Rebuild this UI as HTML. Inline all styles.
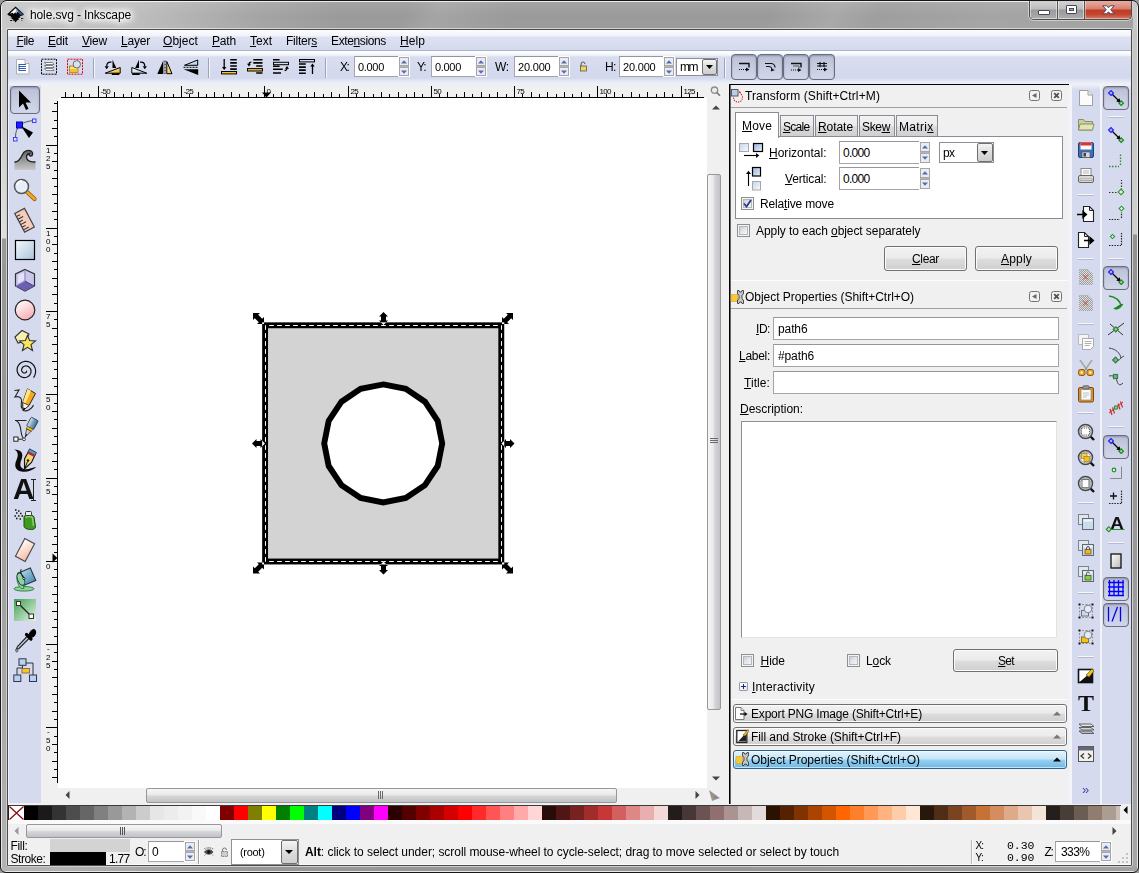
<!DOCTYPE html><html><head><meta charset="utf-8"><title>hole.svg - Inkscape</title><style>
*{box-sizing:border-box;margin:0;padding:0}
html,body{width:1139px;height:873px;overflow:hidden;background:#9a9a9a}
body{font-family:"Liberation Sans",sans-serif;font-size:12px;color:#000;position:relative}
.a{position:absolute}
svg{position:absolute;overflow:visible}
#win{position:absolute;left:0;top:0;width:1139px;height:873px;border-radius:7px 7px 6px 6px;
 background:linear-gradient(180deg,#a8a8a8 0,#a2a2a2 3px,#9a9a9a 15px,#9c9c9c 26px,#989898 30px,#969696 100%);border:1px solid #161616;overflow:hidden;box-shadow:inset 0 0 0 1px rgba(255,255,255,.78)}
#win:before{content:"";position:absolute;left:0;top:0;width:1139px;height:29px;background:linear-gradient(90deg,rgba(255,255,255,.45) 0,rgba(255,255,255,.34) 140px,rgba(255,255,255,.10) 260px,rgba(255,255,255,0) 340px)}
#win:after{content:"";position:absolute;left:0;top:0;width:1139px;height:28px;background:linear-gradient(115deg,rgba(255,255,255,0) 370px,rgba(255,255,255,.10) 400px,rgba(255,255,255,0) 470px,rgba(255,255,255,0) 700px,rgba(255,255,255,.14) 760px,rgba(255,255,255,.04) 800px,rgba(255,255,255,.10) 900px,rgba(255,255,255,.05) 1139px)}
.sideL{position:absolute;left:1px;top:1px;width:4px;height:868px;background:linear-gradient(180deg,#c9c9c9 0,#cfcfcf 120px,#dedede 236px,#999 237px,#969696 400px,#b2b2b2 868px)}
.sideR{position:absolute;left:1132px;top:1px;width:4px;height:868px;background:linear-gradient(180deg,#c4c4c4 0,#c8c8c8 120px,#d0d0d0 232px,#929292 233px,#939393 400px,#a6a6a6 868px)}
.botF{position:absolute;left:1px;top:866px;width:1135px;height:4px;background:linear-gradient(90deg,#b6b6b6 0,#b0b0b0 70px,#989898 250px,#969696 700px,#a2a2a2 1135px)}
#client{position:absolute;left:8px;top:30px;width:1123px;height:835px;background:#f0f0f0;overflow:hidden}
.t{position:absolute;white-space:pre;line-height:14px;height:14px}
u{text-decoration:underline;text-underline-offset:1px;text-decoration-thickness:1px}
.lav{background:#d5daee}
.entry{background:#fff;border:1px solid #a3a5ab;border-top-color:#94969c}
.btn{border:1px solid #707070;border-radius:3px;background:linear-gradient(180deg,#f2f2f2 0,#ebebeb 48%,#dddddd 52%,#cfcfcf 100%);box-shadow:inset 0 0 0 1px #fcfcfc}
.tog{border:1px solid #686c7c;border-radius:4px;background:linear-gradient(180deg,#b9bfd6 0,#c6cbe0 45%,#d1d6ea 100%);box-shadow:inset 0 1px 2px rgba(60,60,90,.35)}
.chk{background:linear-gradient(135deg,#c4c8d0 10%,#e4e6ea 50%,#fbfbfc 90%);border:1px solid #8e8f8f;box-shadow:inset 0 0 0 1px #f4f4f4, inset 0 0 0 2px #b4b8c0}
</style></head><body>
<div id="win"><div class="sideL"></div><div class="sideR"></div><div class="botF"></div></div>
<div class="a " style="left:6px;top:28px;width:1127px;height:839px;border:1px solid rgba(255,255,255,.55);border-radius:2px"></div>
<div class="a " style="left:7px;top:29px;width:1125px;height:837px;border:1px solid #4c4c4c;border-radius:1px"></div>
<div id="client"></div>
<svg style="left:0;top:0" width="32" height="30" viewBox="0 0 32 30">
<path d="M15.600 6.500L23.800 14Q24.100 14.900 23 15.300L19.600 16.500L20.500 17.500L18.200 18.200L19 19.400L17 20.400L15.600 22.400L14.100 20.600L12.600 20.700L13.400 19.300L11.200 19L12.300 17.800L10.200 17.200L11.200 16.400L8.300 15.300Q7.200 14.900 7.500 14Z" fill="#060606"/>
<path d="M15.500 8.200L11.300 12.200L10 13.800L12.800 12.700L13.800 14L15.200 12.200L16.400 13.600L17 11.800L19.200 12.800Z" fill="#f4f6fa"/>
<path d="M16.300 8.300L23 14.300L20.200 14.900L17.800 11.400Z" fill="#2a5a9c"/>
<path d="M16.300 8.300L17.800 11.400L17 11.800L16.400 13.600L15.600 12.600Z" fill="#9ab4d4"/>
<rect x="10" y="20" width="2.200" height="1" rx=".5" fill="#111"/><rect x="21" y="18" width="2.400" height="1" rx=".5" fill="#111"/><rect x="21.200" y="20.200" width="1.200" height=".9" rx=".4" fill="#222"/>
</svg>
<span class="t" style="left:30px;top:8px;text-shadow:0 0 6px #fff,0 0 8px #fff,0 0 10px #fff,0 0 12px #fff,0 0 4px #fff,0 0 14px #fff,0 0 9px #fff;;letter-spacing:-0.126px;">hole.svg - Inkscape</span>
<div class="a" style="left:1026px;top:1px;width:110px;height:24px;overflow:hidden"><div class="a" style="left:3px;top:-1px;width:103px;height:20px;border:1px solid #4d4d4d;border-top:none;border-radius:0 0 5px 5px;overflow:hidden;box-shadow:0 0 0 1px rgba(255,255,255,.45)">
<div class="a" style="left:0;top:0;width:27px;height:19px;background:linear-gradient(180deg,#d0d0d0 0,#d0d0d0 2px,#bdbdbd 48%,#999 52%,#adadad 100%);box-shadow:inset 0 0 0 1px rgba(255,255,255,.5)"></div>
<div class="a" style="left:27px;top:0;width:1px;height:19px;background:#555"></div>
<div class="a" style="left:28px;top:0;width:26px;height:19px;background:linear-gradient(180deg,#d0d0d0 0,#d0d0d0 2px,#bdbdbd 48%,#999 52%,#adadad 100%);box-shadow:inset 0 0 0 1px rgba(255,255,255,.5)"></div>
<div class="a" style="left:54px;top:0;width:1px;height:19px;background:#555"></div>
<div class="a" style="left:55px;top:0;width:47px;height:19px;background:linear-gradient(180deg,#e6a89c 0,#e6a89c 2px,#d57e70 48%,#c43a20 52%,#c2452e 75%,#d47c64 100%);box-shadow:inset 0 0 0 1px rgba(255,255,255,.4)"></div>
</div></div>
<div class="a " style="left:1038px;top:10px;width:12px;height:5px;background:#fff;border:1px solid #44485a;border-radius:1px"></div>
<div class="a " style="left:1066px;top:5px;width:11px;height:9px;border:1px solid #44485a;background:#fff;border-radius:1px"></div>
<div class="a " style="left:1069px;top:8px;width:5px;height:3px;border:1px solid #44485a;background:#a8a8a8"></div>
<svg style="left:1102px;top:5px" width="13" height="10" viewBox="0 0 13 10"><path d="M.800 .800L4.800 .800L6.500 2.800L8.200 .800L12.200 .800L8.700 4.800L12.200 8.800L8.200 8.800L6.500 6.800L4.800 8.800L.800 8.800L4.300 4.800Z" fill="#fff" stroke="#4a4858" stroke-width="1"/></svg>
<div class="a " style="left:8px;top:30px;width:1123px;height:21px;background:linear-gradient(180deg,#fbfcfe 0,#f1f3fa 6px,#dde2f2 7px,#d4d9ee 19px,#d9deef 20px);border-bottom:1px solid #a8b3cf"></div>
<span class="t" style="left:16.5px;top:34px;;letter-spacing:-0.465px;"><u>F</u>ile</span>
<span class="t" style="left:48px;top:34px;;letter-spacing:-0.176px;"><u>E</u>dit</span>
<span class="t" style="left:82px;top:34px;;letter-spacing:-0.203px;"><u>V</u>iew</span>
<span class="t" style="left:121px;top:34px;;letter-spacing:-0.206px;"><u>L</u>ayer</span>
<span class="t" style="left:163px;top:34px;;letter-spacing:0.049px;"><u>O</u>bject</span>
<span class="t" style="left:212px;top:34px;;letter-spacing:-0.176px;"><u>P</u>ath</span>
<span class="t" style="left:250px;top:34px;;letter-spacing:-0.004px;"><u>T</u>ext</span>
<span class="t" style="left:286px;top:34px;;letter-spacing:-0.239px;">Filter<u>s</u></span>
<span class="t" style="left:331px;top:34px;;letter-spacing:-0.372px;">Exte<u>n</u>sions</span>
<span class="t" style="left:400px;top:34px;;letter-spacing:0.078px;"><u>H</u>elp</span>
<div class="a " style="left:8px;top:51px;width:1123px;height:33px;background:linear-gradient(180deg,#ffffff 0,#f3f5fb 4px,#d8ddf0 6px,#d3d8ed 27px,#e4e8f5 30px,#eef0f8 33px)"></div>
<div class="a " style="left:93px;top:58px;width:1px;height:20px;background:#9ea4b8"></div>
<div class="a " style="left:94px;top:58px;width:1px;height:20px;background:#f4f6fc"></div>
<div class="a " style="left:208px;top:58px;width:1px;height:20px;background:#9ea4b8"></div>
<div class="a " style="left:209px;top:58px;width:1px;height:20px;background:#f4f6fc"></div>
<div class="a " style="left:325px;top:58px;width:1px;height:20px;background:#9ea4b8"></div>
<div class="a " style="left:326px;top:58px;width:1px;height:20px;background:#f4f6fc"></div>
<div class="a " style="left:724px;top:58px;width:1px;height:20px;background:#9ea4b8"></div>
<div class="a " style="left:725px;top:58px;width:1px;height:20px;background:#f4f6fc"></div>
<svg style="left:16px;top:58px" width="15" height="17" viewBox="0 0 15 17" ><path d="M.500 1.500h8.500l4 4v10.500h-12.500z" fill="#fdfdfd" stroke="#b0b0b0"/><path d="M9 1.500v4h4" fill="#eee" stroke="#b0b0b0"/><path d="M3 6.500h7M3 8.500h7M3 10.500h7M3 12.500h7" stroke="#2f62b0" stroke-width="1.100"/><path d="M3 6v7" stroke="#2f62b0" stroke-width="1"/></svg>
<svg style="left:41px;top:58px" width="17" height="17" viewBox="0 0 17 17" ><rect x=".500" y="1.200" width="15" height="15" fill="none" stroke="#000" stroke-width="1" stroke-dasharray="2 1"/><path d="M3.500 4.500h8l1.500 2h-8zM3.500 7.500h8l1.500 2h-8zM3.500 10.500h8l1.500 2h-8z" fill="#fff" stroke="#666" stroke-width=".8"/></svg>
<svg style="left:67px;top:58px" width="17" height="17" viewBox="0 0 17 17" ><rect x=".500" y="1.200" width="15" height="15" fill="none" stroke="#e00000" stroke-width="1" stroke-dasharray="2 1"/><rect x="2.500" y="8" width="8.500" height="6.500" fill="#f5c52a" stroke="#9a7a10" stroke-width=".7"/><path d="M3 9h7.500v2h-7.500z" fill="#fbe28a"/><circle cx="9.800" cy="6.300" r="3.700" fill="#d6e4f2" stroke="#6a6a6a" stroke-width="1"/></svg>
<svg style="left:104px;top:58px" width="18" height="18" viewBox="0 0 18 18" ><defs><linearGradient id="yg" x1="0" y1="0" x2="1" y2="1"><stop offset="0" stop-color="#fff6c8"/><stop offset="1" stop-color="#f1b61a"/></linearGradient><linearGradient id="bg" x1="0" y1="0" x2="1" y2="1"><stop offset="0" stop-color="#ffffff"/><stop offset="1" stop-color="#a9c8e0"/></linearGradient></defs><path d="M8.500 1.800L8.500 10L12.300 10Z" fill="#000"/><path d="M7.800 14.500h7.500v2.500h-7.500z" fill="#000"/><path d="M1.200 15.200L16.200 9.500L16.200 15.200Z" fill="url(#yg)" stroke="#000" stroke-width="1"/><path d="M7.500 4.200C4 3.600 2.700 5.500 2.700 8.500" fill="none" stroke="#000" stroke-width="1.200"/><path d="M.600 8.200h4.200L2.700 11.200z" fill="#000"/></svg>
<svg style="left:131px;top:58px" width="18" height="18" viewBox="0 0 18 18" ><path d="M8 1.800L8 10L4.200 10Z" fill="#000"/><path d="M1.200 14.500h7.500v2.500h-7.500z" fill="#000"/><path d="M15.800 15.200L.800 9.500L.800 15.200Z" fill="url(#bg)" stroke="#000" stroke-width="1"/><path d="M9 4.200C12.500 3.600 13.800 5.500 13.800 8.500" fill="none" stroke="#000" stroke-width="1.200"/><path d="M11.700 8.200h4.200L13.800 11.200z" fill="#000"/></svg>
<svg style="left:157px;top:58px" width="17" height="18" viewBox="0 0 17 18" ><path d="M6.300 2.500L6.300 16L.300 16Z" fill="#000"/><path d="M9.800 3.500L15 15.700L9.800 15.700Z" fill="url(#yg)" stroke="#000" stroke-width="1"/><path d="M8 2.500v13.500" stroke="#000" stroke-width="1" stroke-dasharray="2 1"/></svg>
<svg style="left:183px;top:58px" width="17" height="18" viewBox="0 0 17 18" ><path d="M14.700 2L14.700 7.300L1.500 7.300Z" fill="url(#bg)" stroke="#000" stroke-width="1"/><path d="M.500 11.300L15.200 11.300L15.200 17Z" fill="#000"/><path d="M.500 9.300h14.700" stroke="#000" stroke-width="1" stroke-dasharray="2 1"/></svg>
<svg style="left:221px;top:59px" width="17" height="16" viewBox="0 0 17 16" ><path d="M9.200 .800h6.600M9.200 3.900h6.600M9.200 7h6.600M9.200 10.100h6.600" stroke="#000" stroke-width="1.600"/><rect x=".500" y="12.500" width="15" height="2.400" fill="#f5c52a" stroke="#000" stroke-width="1"/><path d="M3.200 0v9" stroke="#000" stroke-width="1.300"/><path d="M1 8h4.400L3.200 11z" fill="#000"/></svg>
<svg style="left:247px;top:59px" width="17" height="16" viewBox="0 0 17 16" ><path d="M6.300 .800h9.200M6.300 3.900h9.200M9.200 7h6.300M9.200 14h6.300" stroke="#000" stroke-width="1.600"/><rect x=".500" y="9.600" width="15" height="2.400" fill="#f5c52a" stroke="#000" stroke-width="1"/><path d="M4.500 3C2.500 3 2 4 2 5.500" fill="none" stroke="#000" stroke-width="1.200"/><path d="M0 4.800h4L2 7.600z" fill="#000"/></svg>
<svg style="left:273px;top:59px" width="17" height="16" viewBox="0 0 17 16" ><path d="M0 .800h6.600M0 7.300h6.600M0 10.200h9.800M0 14h8" stroke="#000" stroke-width="1.600"/><rect x=".500" y="3.300" width="15" height="2.400" fill="#cfe0ee" stroke="#000" stroke-width="1"/><path d="M11.500 11.500C13.500 11.500 14 10.500 14 9" fill="none" stroke="#000" stroke-width="1.200"/><path d="M12 9.700h4L14 6.900z" fill="#000"/></svg>
<svg style="left:299px;top:59px" width="17" height="16" viewBox="0 0 17 16" ><path d="M0 5h6.800M0 8.100h6.800M0 11.100h6.800M0 14.200h6.800" stroke="#000" stroke-width="1.600"/><rect x=".500" y=".500" width="15" height="2.400" fill="#cfe0ee" stroke="#000" stroke-width="1"/><path d="M13.500 15v-9" stroke="#000" stroke-width="1.300"/><path d="M11.300 7.500h4.400L13.500 4.500z" fill="#000"/></svg>
<span class="t" style="left:340px;top:60px;;letter-spacing:-1.422px;">X:</span>
<div class="a entry" style="left:354px;top:56px;width:45px;height:21px;border-right:none"></div>
<span class="t" style="left:358px;top:59.5px;font-size:11px;letter-spacing:-0.306px;">0.000</span>
<div class="a " style="left:398px;top:56px;width:12px;height:21px;background:#fff"></div>
<div class="a " style="left:399px;top:57px;width:10px;height:19px;background:#b4b4b8"></div>
<div class="a " style="left:399px;top:57px;width:10px;height:9px;border:1px solid #a6a6aa;background:#ececee"></div>
<div class="a " style="left:399px;top:67px;width:10px;height:9px;border:1px solid #a6a6aa;background:#ececee"></div>
<svg style="left:401px;top:60px" width="6" height="4"><path d="M0 3.500L3 0.300L6 3.500z" fill="#4f6bbd"/></svg>
<svg style="left:401px;top:70px" width="6" height="4"><path d="M0 0.500L3 3.700L6 0.500z" fill="#4f6bbd"/></svg>
<span class="t" style="left:417px;top:60px;;letter-spacing:-1.094px;">Y:</span>
<div class="a entry" style="left:431px;top:56px;width:45px;height:21px;border-right:none"></div>
<span class="t" style="left:435px;top:59.5px;font-size:11px;letter-spacing:-0.306px;">0.000</span>
<div class="a " style="left:475px;top:56px;width:12px;height:21px;background:#fff"></div>
<div class="a " style="left:476px;top:57px;width:10px;height:19px;background:#b4b4b8"></div>
<div class="a " style="left:476px;top:57px;width:10px;height:9px;border:1px solid #a6a6aa;background:#ececee"></div>
<div class="a " style="left:476px;top:67px;width:10px;height:9px;border:1px solid #a6a6aa;background:#ececee"></div>
<svg style="left:478px;top:60px" width="6" height="4"><path d="M0 3.500L3 0.300L6 3.500z" fill="#4f6bbd"/></svg>
<svg style="left:478px;top:70px" width="6" height="4"><path d="M0 0.500L3 3.700L6 0.500z" fill="#4f6bbd"/></svg>
<span class="t" style="left:495px;top:60px;;letter-spacing:-0.477px;">W:</span>
<div class="a entry" style="left:514px;top:56px;width:45px;height:21px;border-right:none"></div>
<span class="t" style="left:518px;top:59.5px;font-size:11px;letter-spacing:-0.193px;">20.000</span>
<div class="a " style="left:558px;top:56px;width:12px;height:21px;background:#fff"></div>
<div class="a " style="left:559px;top:57px;width:10px;height:19px;background:#b4b4b8"></div>
<div class="a " style="left:559px;top:57px;width:10px;height:9px;border:1px solid #a6a6aa;background:#ececee"></div>
<div class="a " style="left:559px;top:67px;width:10px;height:9px;border:1px solid #a6a6aa;background:#ececee"></div>
<svg style="left:561px;top:60px" width="6" height="4"><path d="M0 3.500L3 0.300L6 3.500z" fill="#4f6bbd"/></svg>
<svg style="left:561px;top:70px" width="6" height="4"><path d="M0 0.500L3 3.700L6 0.500z" fill="#4f6bbd"/></svg>
<svg style="left:579px;top:61px" width="9" height="11" viewBox="0 0 9 11" ><rect x="1.500" y="5" width="6" height="5" fill="#e9d27a" stroke="#6b5a1c" stroke-width=".8"/><path d="M2 5 V3 A2 2 0 0 1 6 3" fill="none" stroke="#555" stroke-width="1"/></svg>
<span class="t" style="left:605px;top:60px;;letter-spacing:-0.750px;">H:</span>
<div class="a entry" style="left:619px;top:56px;width:45px;height:21px;border-right:none"></div>
<span class="t" style="left:623px;top:59.5px;font-size:11px;letter-spacing:-0.193px;">20.000</span>
<div class="a " style="left:663px;top:56px;width:12px;height:21px;background:#fff"></div>
<div class="a " style="left:664px;top:57px;width:10px;height:19px;background:#b4b4b8"></div>
<div class="a " style="left:664px;top:57px;width:10px;height:9px;border:1px solid #a6a6aa;background:#ececee"></div>
<div class="a " style="left:664px;top:67px;width:10px;height:9px;border:1px solid #a6a6aa;background:#ececee"></div>
<svg style="left:666px;top:60px" width="6" height="4"><path d="M0 3.500L3 0.300L6 3.500z" fill="#4f6bbd"/></svg>
<svg style="left:666px;top:70px" width="6" height="4"><path d="M0 0.500L3 3.700L6 0.500z" fill="#4f6bbd"/></svg>
<div class="a " style="left:676px;top:58px;width:42px;height:18px;background:#fff;border:1px solid #8e8f95"></div>
<span class="t" style="left:680px;top:60px;;letter-spacing:-1.500px;">mm</span>
<div class="a " style="left:702px;top:59px;width:15px;height:16px;border:1px solid #6f6f6f;border-radius:2px;background:linear-gradient(180deg,#f4f4f4,#dcdcdc 50%,#cfcfcf)"></div>
<svg style="left:706px;top:65px" width="7" height="4" viewBox="0 0 7 4" ><path d="M0 0h7L3.500 4z" fill="#000"/></svg>
<div class="a tog" style="left:731px;top:54px;width:26px;height:26px;"></div>
<div class="a tog" style="left:757px;top:54px;width:26px;height:26px;"></div>
<div class="a tog" style="left:783px;top:54px;width:26px;height:26px;"></div>
<div class="a tog" style="left:809px;top:54px;width:26px;height:26px;"></div>
<svg style="left:738px;top:62px" width="13" height="10" viewBox="0 0 13 10" ><path d="M1 1.500h10v4" stroke="#111" stroke-width="1.400" fill="none"/><path d="M1 7.500h7" stroke="#111" stroke-width="1" stroke-dasharray="1 1"/><path d="M8 5.500l3.500 2l-3.500 2z" fill="#111"/></svg>
<svg style="left:764px;top:62px" width="13" height="10" viewBox="0 0 13 10" ><path d="M1 1.500h6a4 4 0 0 1 4 4" stroke="#111" stroke-width="1.200" fill="none"/><path d="M2 4.500h3a3 3 0 0 1 3 3" stroke="#111" stroke-width="1" fill="none"/><path d="M7 6.500l4 1.500l-4 1.500z" fill="#111"/></svg>
<svg style="left:790px;top:62px" width="13" height="10" viewBox="0 0 13 10" ><path d="M1 1.500h10v4" stroke="#111" stroke-width="1.400" fill="none"/><path d="M3 4h6v2" stroke="#555" stroke-width="1" fill="none"/><path d="M1 8h7" stroke="#111" stroke-width="1" stroke-dasharray="1 1"/><path d="M8 6l3.500 2l-3.500 2z" fill="#111"/></svg>
<svg style="left:816px;top:62px" width="13" height="10" viewBox="0 0 13 10" ><path d="M1 1.500h10M1 4h10M4 0v5M8 0v5" stroke="#111" stroke-width="1.200" fill="none"/><path d="M1 7.500h7" stroke="#111" stroke-width="1" stroke-dasharray="1 1"/><path d="M8 5.500l3.500 2l-3.500 2z" fill="#111"/></svg>
<div class="a " style="left:8px;top:84px;width:33px;height:719px;background:#d5daee"></div>
<div class="a " style="left:8px;top:84px;width:33px;height:2px;background:linear-gradient(180deg,#f3f5fb,#e2e6f4)"></div>
<div class="a " style="left:8px;top:84px;width:1px;height:719px;background:#eef1fb"></div>
<div class="a tog" style="left:10px;top:86px;width:30px;height:28px;"></div>
<svg style="left:13px;top:88px" width="24" height="24" viewBox="0 0 24 24"><path d="M6 2.500 L6 19.500 L10 15.500 L13 22 L15.500 20.800 L12.500 14.500 L18 14.500 Z" fill="#000"/></svg>
<svg style="left:13px;top:118px" width="24" height="24" viewBox="0 0 24 24"><path d="M2.500 19 C2.500 9 8 3.500 21 2.500" fill="none" stroke="#555" stroke-width="1"/><rect x="3.500" y="4" width="6" height="6" fill="#2020ff" stroke="#0000c0"/><rect x="19.500" y="1" width="3.500" height="3.500" fill="#dfe4ff" stroke="#3030ff" stroke-width=".9"/><rect x=".500" y="19.500" width="3.500" height="3.500" fill="#dfe4ff" stroke="#3030ff" stroke-width=".9"/><path d="M8 8 L20 14.500 L16 20 Z" fill="#000"/></svg>
<svg style="left:13px;top:148px" width="24" height="24" viewBox="0 0 24 24"><defs><linearGradient id="tw" x1="0" y1="0" x2="0" y2="1"><stop offset="0" stop-color="#666"/><stop offset="1" stop-color="#c8c8c8"/></linearGradient></defs><path d="M1.500 14 C6 14 8 10 9.500 6.500 C11 3 15 1.500 18 3 C20.500 4.500 20 8 17.500 8 C16 8 15.500 6.500 16.500 5.500 C13.500 5.500 13 9 14 11 C15 13.500 18 14 22.500 14 L22.500 22 L1.500 22 Z" fill="url(#tw)"/><path d="M1.500 14 C6 14 8 10 9.500 6.500 C11 3 15 1.500 18 3 C20.500 4.500 20 8 17.500 8 C16 8 15.500 6.500 16.500 5.500 C13.500 5.500 13 9 14 11 C15 13.500 18 14 22.500 14" fill="none" stroke="#222" stroke-width="1.400"/></svg>
<svg style="left:13px;top:178px" width="24" height="24" viewBox="0 0 24 24"><path d="M13 13 L21.500 21" stroke="#8a5a00" stroke-width="4.200" stroke-linecap="round"/><path d="M13.500 13.500 L21.500 21" stroke="#f5a623" stroke-width="2.600" stroke-linecap="round"/><circle cx="8.500" cy="8.500" r="7" fill="#e6eef7" stroke="#555" stroke-width="1.500"/><path d="M4 7 A5 5 0 0 1 9 3" stroke="#fff" stroke-width="1.600" fill="none"/></svg>
<svg style="left:13px;top:208px" width="24" height="24" viewBox="0 0 24 24"><g transform="rotate(-28 12 12)"><rect x="6" y="1.500" width="11" height="21" fill="#f4cdbd" stroke="#444" stroke-width="1.200"/><path d="M6 5h4M6 8h6M6 11h4M6 14h6M6 17h4M6 20h6" stroke="#333" stroke-width="1"/></g></svg>
<svg style="left:13px;top:238px" width="24" height="24" viewBox="0 0 24 24"><defs><linearGradient id="rg" x1="0" y1="0" x2="1" y2="1"><stop offset="0" stop-color="#f4f8fc"/><stop offset="1" stop-color="#a9c4dc"/></linearGradient></defs><rect x="2.500" y="2.500" width="19" height="19" fill="url(#rg)" stroke="#000" stroke-width="1.200"/></svg>
<svg style="left:13px;top:268px" width="24" height="24" viewBox="0 0 24 24"><path d="M12 1.500 L21.500 6 L21.500 18 L12 23 L2.500 18 L2.500 6 Z" fill="#c9c6ea" stroke="#333" stroke-width="1.200"/><path d="M12 13 L21.500 18 L12 23 L2.500 18 Z" fill="#6a5fb0"/><path d="M12 3 L12 13 L3 18" fill="none" stroke="#8f88cc" stroke-width="1"/><path d="M12 13 L21 18" stroke="#4a4390" stroke-width="1"/><path d="M5 7 L11 4.500 L11 12 L5 15.500 Z" fill="#e4e2f6"/></svg>
<svg style="left:13px;top:298px" width="24" height="24" viewBox="0 0 24 24"><defs><linearGradient id="eg" x1="0.2" y1="0" x2="0.8" y2="1"><stop offset="0" stop-color="#ffffff"/><stop offset="1" stop-color="#f7a8ae"/></linearGradient></defs><circle cx="12" cy="12" r="9.800" fill="url(#eg)" stroke="#222" stroke-width="1.200"/></svg>
<svg style="left:13px;top:328px" width="24" height="24" viewBox="0 0 24 24"><path d="M2 9 L9 2.500 L16 6 L13 13 L5 15 Z" fill="#f6f0b4" stroke="#333" stroke-width="1.100"/><path d="M14.500 7.500 L16.600 12.500 L22.500 13 L18 16.700 L19.500 22.500 L14.500 19.300 L9.500 22.500 L11 16.700 L6.500 13 L12.400 12.500 Z" fill="#f7e65a" stroke="#333" stroke-width="1.100"/></svg>
<svg style="left:13px;top:358px" width="24" height="24" viewBox="0 0 24 24"><path d="M13.40 12.68 L13.49 12.91 L13.53 13.16 L13.52 13.44 L13.46 13.72 L13.33 14.01 L13.14 14.28 L12.90 14.53 L12.59 14.73 L12.24 14.89 L11.84 14.99 L11.42 15.01 L10.98 14.96 L10.54 14.82 L10.11 14.60 L9.70 14.30 L9.35 13.92 L9.06 13.46 L8.84 12.95 L8.70 12.38 L8.67 11.78 L8.74 11.17 L8.92 10.56 L9.21 9.96 L9.60 9.41 L10.10 8.93 L10.69 8.52 L11.36 8.21 L12.09 8.01 L12.86 7.93 L13.65 7.99 L14.45 8.18 L15.21 8.51 L15.93 8.98 L16.58 9.57 L17.12 10.28 L17.55 11.08 L17.85 11.97 L18.00 12.91 L17.99 13.89 L17.81 14.87 L17.46 15.82 L16.96 16.72 L16.29 17.54 L15.49 18.25 L14.56 18.82 L13.53 19.25 L12.42 19.50 L11.27 19.56 L10.11 19.43 L8.96 19.10 L7.87 18.58 L6.86 17.87 L5.96 16.99 L5.22 15.96 L4.65 14.80 L4.27 13.55 L4.10 12.22 L4.15 10.87 L4.43 9.53 L4.94 8.24 L5.66 7.02 L6.58 5.93 L7.69 5.00 L8.96 4.25 L10.35 3.71 L11.83 3.40 L13.36 3.35 L14.90 3.55 L16.40 4.01 L17.83 4.71 L19.13 5.66 L20.27 6.82 L21.22 8.17 L21.94 9.68 L22.41 11.30 L22.61 13.00 L22.52 14.73 L22.14 16.44 L21.48 18.08 L20.55 19.61" fill="none" stroke="#111" stroke-width="1.200"/></svg>
<svg style="left:13px;top:388px" width="24" height="24" viewBox="0 0 24 24"><path d="M1.500 2.500L6 2L2 9C5 8 8 9 8.500 12C9 15 7 18 9 20.500" fill="none" stroke="#222" stroke-width="1.100"/><path d="M14.500 .800L22.500 5.500L16 17.500L10 22.500L9.800 14.500Z" fill="#f7a81b" stroke="#222" stroke-width="1"/><path d="M14.500 .800L18 2.800L12.500 15.500L9.800 14.500Z" fill="#ffe680"/><path d="M9.800 14.500L16 17.500L10 22.500Z" fill="#fdf6e6" stroke="#222" stroke-width=".8"/><path d="M10 22.500L10.500 19.500L12.500 20.500Z" fill="#000"/><path d="M10 22.500C14 24 19 21 20.500 17" fill="none" stroke="#222" stroke-width="1.100"/></svg>
<svg style="left:13px;top:418px" width="24" height="24" viewBox="0 0 24 24"><defs><linearGradient id="pn" x1="0" y1="0" x2="1" y2="0"><stop offset="0" stop-color="#dbe9f2"/><stop offset=".5" stop-color="#7fa6c4"/><stop offset="1" stop-color="#3f6f94"/></linearGradient></defs><path d="M2 2.500H13.500M3.500 3C10 6 6 17 11 21" fill="none" stroke="#222" stroke-width="1.100"/><rect x=".800" y="19" width="4.200" height="4.200" fill="#fff" stroke="#222" stroke-width="1"/><path d="M5 21.200H10" stroke="#222" stroke-width="1"/><circle cx="11" cy="21.300" r="1.400" fill="#fff" stroke="#222" stroke-width=".8"/><g transform="rotate(28 18 8)"><rect x="14" y="0" width="8" height="10" rx="1" fill="url(#pn)" stroke="#2a3a4a" stroke-width=".8"/><rect x="15" y="10" width="6" height="2.600" fill="#f5c211" stroke="#7a5a10" stroke-width=".6"/><path d="M15.500 12.600h5l-1.500 5h-2z" fill="#c9ced4" stroke="#333" stroke-width=".7"/><path d="M17 17.600h2l-1 4.500z" fill="#111"/></g></svg>
<svg style="left:13px;top:448px" width="24" height="24" viewBox="0 0 24 24"><path d="M1 1.500C8 1.500 11 5 8.500 11.500C6.500 16.500 7 20 11 21C15 22 19 19.500 23.500 19C19 22.500 14 24.500 8.500 23.500C2 22.300 1 17.500 3.500 12C5.500 7.500 5.500 3.500 1 1.500Z" fill="#0a0a0a"/><path d="M15.500 3.500L22 7L18.500 14.500L11.500 21L11.500 11Z" fill="#f4d477" stroke="#111" stroke-width="1.100"/><path d="M11.500 21L14.500 13.500" stroke="#111" stroke-width="1"/><circle cx="15" cy="12.500" r="1.200" fill="#111"/><path d="M16.500 .800L23.500 4.500L22 7.500L15 4Z" fill="#5f8fb8" stroke="#234" stroke-width=".8"/><path d="M15 4L22 7.500L21.200 9L14.300 5.500Z" fill="#d02020"/></svg>
<span class="t" style="left:13px;top:474px;width:22px;height:30px;line-height:30px;font-size:29px;font-weight:bold;letter-spacing:0;color:#111;transform:scale(1.02,1);transform-origin:0 0">A</span>
<div class="a " style="left:33px;top:479px;width:1px;height:22px;background:#222"></div>
<div class="a " style="left:31px;top:479px;width:5px;height:1px;background:#222"></div>
<div class="a " style="left:31px;top:500px;width:5px;height:1px;background:#222"></div>
<svg style="left:13px;top:508px" width="24" height="24" viewBox="0 0 24 24"><path d="M11 9 C11 6 20 6 21 9 L22.500 19 C22.500 23 11 22 11 18 Z" fill="#3f9b1f" stroke="#1d4f0e" stroke-width="1"/><path d="M13 10 C13 8 19 8 19.500 10 L20.500 18" fill="none" stroke="#8ed06a" stroke-width="1.500"/><rect x="12.500" y="3.500" width="6" height="4" rx="1" fill="#eee" stroke="#333" stroke-width="1"/><path d="M2 2h1.500M5 3h1.500M3 5h1.500M7 5.500h1.500M1.500 8h1.500M5 8h1.500M8.500 8h1.500M3 10.500h1.500M6.500 11h1.500" stroke="#111" stroke-width="1.500"/></svg>
<svg style="left:13px;top:538px" width="24" height="24" viewBox="0 0 24 24"><defs><linearGradient id="er" x1="0" y1="0" x2="1" y2="1"><stop offset="0" stop-color="#fff"/><stop offset="1" stop-color="#f5b8a0"/></linearGradient></defs><g transform="rotate(28 12 12)"><rect x="6.500" y="2" width="11" height="20" fill="url(#er)" stroke="#444" stroke-width="1.100"/></g></svg>
<svg style="left:13px;top:568px" width="24" height="24" viewBox="0 0 24 24"><defs><linearGradient id="bk" x1="0" y1="0" x2="1" y2="1"><stop offset="0" stop-color="#d4e8f2"/><stop offset=".5" stop-color="#7fb0cc"/><stop offset="1" stop-color="#3f7a9e"/></linearGradient></defs><ellipse cx="11" cy="20.800" rx="10" ry="2.300" fill="#8ed49a" stroke="#2d7a3a" stroke-width=".9"/><path d="M4.500 6C3 10 4 16 8 20.500L11 20.500C9.500 16 9.500 12 10 9Z" fill="#8ed49a" stroke="#2d7a3a" stroke-width=".8"/><path d="M4.800 5.300L17.300 0L22.800 12.500L11 17.200Z" fill="url(#bk)" stroke="#1f3a4a" stroke-width="1.100"/><ellipse cx="7.900" cy="11.200" rx="3.300" ry="6.400" transform="rotate(-22 7.900 11.200)" fill="#8ed49a" stroke="#1f3a4a" stroke-width="1"/><path d="M8.200 1.200C7 3.500 8.500 7.500 10.800 10.300" fill="none" stroke="#111" stroke-width="1"/><circle cx="10.900" cy="10.500" r="1.100" fill="#ddd" stroke="#111" stroke-width=".7"/></svg>
<svg style="left:13px;top:598px" width="24" height="24" viewBox="0 0 24 24"><defs><linearGradient id="gg" x1="0" y1="0" x2="1" y2="1"><stop offset="0" stop-color="#3f9f4f"/><stop offset="1" stop-color="#e6f4e6"/></linearGradient></defs><rect x="1" y="1" width="22" height="22" fill="url(#gg)"/><path d="M5.500 5.500 L18 18" stroke="#222" stroke-width="1.300"/><rect x="3.500" y="3.500" width="4" height="4" fill="#fff" stroke="#333" stroke-width="1"/><rect x="16" y="16" width="4.500" height="4.500" fill="#fff" stroke="#333" stroke-width="1"/></svg>
<svg style="left:13px;top:628px" width="24" height="24" viewBox="0 0 24 24"><path d="M14.500 8L4.500 18.500L3.200 21.500L6 20.500L16.500 10Z" fill="#b8cfe6" stroke="#222" stroke-width="1.100"/><path d="M13.500 6.500L18 11" stroke="#000" stroke-width="3.200" stroke-linecap="round"/><path d="M15 9C15.500 5.500 17.500 1.500 21 1C24 2 23.800 6.500 21 8.800C19 10.500 16.500 10 15 9Z" fill="#000"/><path d="M3.700 20.500C2.200 22.500 2.700 24 3.900 24C5.100 24 5.500 22.500 3.700 20.500Z" fill="#9ab8d8" stroke="#333" stroke-width=".7"/></svg>
<svg style="left:13px;top:658px" width="24" height="24" viewBox="0 0 24 24"><path d="M9.500 7 L9.500 13 M9.500 10 L4 10 L4 17 M13 5 L20 5 L20 17" fill="none" stroke="#333" stroke-width="1"/><rect x="6" y=".800" width="7" height="6.500" fill="#b7d3ee" stroke="#335" stroke-width="1"/><rect x="9" y="10.500" width="7.500" height="4.500" fill="#f7c623" stroke="#864" stroke-width=".9"/><rect x=".800" y="17" width="7" height="6.500" fill="#b7d3ee" stroke="#335" stroke-width="1"/><rect x="16.500" y="17" width="7" height="6.500" fill="#b7d3ee" stroke="#335" stroke-width="1"/></svg>
<div class="a " style="left:41px;top:84px;width:689px;height:720px;background:#f0f0f0"></div>
<div class="a " style="left:58px;top:98px;width:649px;height:690px;background:#fff"></div>
<svg style="left:0;top:0" width="1139" height="873" viewBox="0 0 1139 873"><path d="M61 97.500H704" stroke="#000" stroke-width="1"/><path d="M65.5 92V97M73.5 94V97M81.5 92V97M89.5 94V97M98.5 86V97M106.5 94V97M114.5 92V97M123.5 94V97M131.5 92V97M139.5 94V97M148.5 92V97M156.5 94V97M164.5 92V97M173.5 94V97M181.5 86V97M189.5 94V97M198.5 92V97M206.5 94V97M214.5 92V97M223.5 94V97M231.5 92V97M239.5 94V97M248.5 92V97M256.5 94V97M264.5 86V97M273.5 94V97M281.5 92V97M289.5 94V97M298.5 92V97M306.5 94V97M314.5 92V97M323.5 94V97M331.5 92V97M339.5 94V97M348.5 86V97M356.5 94V97M364.5 92V97M373.5 94V97M381.5 92V97M389.5 94V97M398.5 92V97M406.5 94V97M414.5 92V97M422.5 94V97M431.5 86V97M439.5 94V97M447.5 92V97M456.5 94V97M464.5 92V97M472.5 94V97M481.5 92V97M489.5 94V97M497.5 92V97M506.5 94V97M514.5 86V97M522.5 94V97M531.5 92V97M539.5 94V97M547.5 92V97M556.5 94V97M564.5 92V97M572.5 94V97M581.5 92V97M589.5 94V97M597.5 86V97M606.5 94V97M614.5 92V97M622.5 94V97M631.5 92V97M639.5 94V97M647.5 92V97M656.5 94V97M664.5 92V97M672.5 94V97M681.5 86V97M689.5 94V97M697.5 92V97" stroke="#000" stroke-width="1" shape-rendering="crispEdges"/><path d="M57.500 101V783" stroke="#000" stroke-width="1"/><path d="M54 103.5H57M52 111.5H57M54 120.5H57M52 128.5H57M54 136.5H57M46 145.5H57M54 153.5H57M52 161.5H57M54 170.5H57M52 178.5H57M54 186.5H57M52 194.5H57M54 203.5H57M52 211.5H57M54 219.5H57M46 228.5H57M54 236.5H57M52 244.5H57M54 253.5H57M52 261.5H57M54 269.5H57M52 278.5H57M54 286.5H57M52 294.5H57M54 303.5H57M46 311.5H57M54 319.5H57M52 328.5H57M54 336.5H57M52 344.5H57M54 353.5H57M52 361.5H57M54 369.5H57M52 378.5H57M54 386.5H57M46 394.5H57M54 403.5H57M52 411.5H57M54 419.5H57M52 428.5H57M54 436.5H57M52 444.5H57M54 453.5H57M52 461.5H57M54 469.5H57M46 478.5H57M54 486.5H57M52 494.5H57M54 503.5H57M52 511.5H57M54 519.5H57M52 528.5H57M54 536.5H57M52 544.5H57M54 552.5H57M46 561.5H57M54 569.5H57M52 577.5H57M54 586.5H57M52 594.5H57M54 602.5H57M52 611.5H57M54 619.5H57M52 627.5H57M54 636.5H57M46 644.5H57M54 652.5H57M52 661.5H57M54 669.5H57M52 677.5H57M54 686.5H57M52 694.5H57M54 702.5H57M52 711.5H57M54 719.5H57M46 727.5H57M54 736.5H57M52 744.5H57M54 752.5H57M52 761.5H57M54 769.5H57M52 777.5H57" stroke="#000" stroke-width="1" shape-rendering="crispEdges"/><g font-family="Liberation Sans, sans-serif" font-size="8" fill="#000" letter-spacing="-0.65"><text x="100.5" y="94" >-50</text><text x="183.5" y="94" >-25</text><text x="266.5" y="94" >0</text><text x="350.5" y="94" >25</text><text x="433.5" y="94" >50</text><text x="516.5" y="94" >75</text><text x="599.5" y="94" >100</text><text x="683.5" y="94" >125</text><text x="46" y="152.5">1</text><text x="46" y="160.5">2</text><text x="46" y="168.5">5</text><text x="46" y="235.5">1</text><text x="46" y="243.5">0</text><text x="46" y="251.5">0</text><text x="46" y="318.5">7</text><text x="46" y="326.5">5</text><text x="46" y="401.5">5</text><text x="46" y="409.5">0</text><text x="46" y="485.5">2</text><text x="46" y="493.5">5</text><text x="46" y="568.5">0</text><text x="47" y="650.5">-</text><text x="46" y="659.5">2</text><text x="46" y="667.5">5</text><text x="47" y="733.5">-</text><text x="46" y="742.5">5</text><text x="46" y="750.5">0</text></g><path d="M262 92.500h9l-4.500 5z" fill="#000"/><path d="M52.500 553.500v9l5-4.500z" fill="#000"/></svg>
<svg style="left:0;top:0" width="1139" height="873" viewBox="0 0 1139 873"><rect x="265.1" y="325.3" width="236.2" height="236.2" fill="#d3d3d3" stroke="#000" stroke-width="5.900"/><polygon points="383.20,384.40 405.78,388.89 424.92,401.68 437.71,420.82 442.20,443.40 437.71,465.98 424.92,485.12 405.78,497.91 383.20,502.40 360.62,497.91 341.48,485.12 328.69,465.98 324.20,443.40 328.69,420.82 341.48,401.68 360.62,388.89" fill="#fff" stroke="#000" stroke-width="5.900" stroke-linejoin="miter"/><rect x="265.500" y="325.500" width="236" height="236" fill="none" stroke="#fff" stroke-width="1" stroke-dasharray="4.600 3.400" stroke-dashoffset="4.300"/></svg>
<svg style="left:0;top:0;mix-blend-mode:difference" width="1139" height="873" viewBox="0 0 1139 873"><g fill="#fff"><g transform="translate(253 313)"><path d="M0 0L7 0L5.200 1.800L9.200 5.800L11 4L11 11L4 11L5.800 9.200L1.800 5.200L0 7Z"/></g><g transform="translate(513 313) scale(-1 1)"><path d="M0 0L7 0L5.200 1.800L9.200 5.800L11 4L11 11L4 11L5.800 9.200L1.800 5.200L0 7Z"/></g><g transform="translate(264 562.5) scale(-1 1)"><path d="M0 0L7 0L5.200 1.800L9.200 5.800L11 4L11 11L4 11L5.800 9.200L1.800 5.200L0 7Z"/></g><g transform="translate(502 562.5)"><path d="M0 0L7 0L5.200 1.800L9.200 5.800L11 4L11 11L4 11L5.800 9.200L1.800 5.200L0 7Z"/></g><g transform="translate(258.5 443.5) rotate(0)"><path d="M-6.500 0L-2 -4.500L-2 -2.500L2 -2.500L2 -4.500L6.500 0L2 4.500L2 2.500L-2 2.500L-2 4.500Z"/></g><g transform="translate(508 443.5) rotate(0)"><path d="M-6.500 0L-2 -4.500L-2 -2.500L2 -2.500L2 -4.500L6.500 0L2 4.500L2 2.500L-2 2.500L-2 4.500Z"/></g><g transform="translate(383.5 318.5) rotate(90)"><path d="M-6.500 0L-2 -4.500L-2 -2.500L2 -2.500L2 -4.500L6.500 0L2 4.500L2 2.500L-2 2.500L-2 4.500Z"/></g><g transform="translate(383.5 568) rotate(90)"><path d="M-6.500 0L-2 -4.500L-2 -2.500L2 -2.500L2 -4.500L6.500 0L2 4.500L2 2.500L-2 2.500L-2 4.500Z"/></g></g></svg>
<div class="a " style="left:707px;top:98px;width:14px;height:688px;background:#f0f0f0"></div>
<div class="a " style="left:707px;top:174px;width:14px;height:536px;border:1px solid #979797;border-radius:2px;background:linear-gradient(90deg,#f6f6f6 0,#e9e9eb 45%,#d5d6d8 55%,#c2c3c6 100%)"></div>
<svg style="left:711.5px;top:104.5px" width="8" height="5" viewBox="0 0 8 5" ><path d="M0 4.500L4 0.500L8 4.500z" fill="#444"/></svg>
<svg style="left:711.5px;top:776px" width="8" height="5" viewBox="0 0 8 5" ><path d="M0 .500L4 4.500L8 .500z" fill="#444"/></svg>
<div class="a " style="left:710px;top:438px;width:8px;height:1px;background:#6a6a6a"></div>
<div class="a " style="left:710px;top:440px;width:8px;height:1px;background:#6a6a6a"></div>
<div class="a " style="left:710px;top:442px;width:8px;height:1px;background:#6a6a6a"></div>
<div class="a " style="left:58px;top:788px;width:649px;height:16px;background:#f0f0f0"></div>
<div class="a " style="left:146px;top:788px;width:471px;height:15px;border:1px solid #979797;border-radius:2px;background:linear-gradient(180deg,#f6f6f6 0,#e9e9eb 45%,#d5d6d8 55%,#c2c3c6 100%)"></div>
<svg style="left:65px;top:791px" width="5" height="8" viewBox="0 0 5 8" ><path d="M4.500 0L.500 4L4.500 8z" fill="#444"/></svg>
<svg style="left:695px;top:791px" width="5" height="8" viewBox="0 0 5 8" ><path d="M.500 0L4.500 4L.500 8z" fill="#444"/></svg>
<div class="a " style="left:378px;top:791px;width:1px;height:8px;background:#6a6a6a"></div>
<div class="a " style="left:380px;top:791px;width:1px;height:8px;background:#6a6a6a"></div>
<div class="a " style="left:382px;top:791px;width:1px;height:8px;background:#6a6a6a"></div>
<svg style="left:709.5px;top:85.5px" width="12" height="12" viewBox="0 0 12 12" ><circle cx="4.500" cy="4.200" r="3.200" fill="#e9ecef" stroke="#8c8c8c" stroke-width="1.300"/><path d="M6.900 6.600L10 9.700" stroke="#777" stroke-width="1.600"/></svg>
<svg style="left:709px;top:790px" width="11" height="11" viewBox="0 0 11 11" ><path d="M0 0 L11 8 L3 11 Z" fill="#9a9a9a"/><path d="M1 1.500 L8.500 7.500 L3.500 9.500Z" fill="#c77"/><path d="M1 1.500L5 6 L3.500 9.500z" fill="#7a7"/><path d="M4 5l5 2.700l-2 .8z" fill="#77c"/></svg>
<div class="a " style="left:729px;top:84px;width:340px;height:720px;background:#f0f0f0"></div>
<div class="a " style="left:729px;top:84px;width:340px;height:1px;background:#000"></div>
<div class="a " style="left:729px;top:84px;width:1px;height:720px;background:#000"></div>
<div class="a " style="left:730px;top:85px;width:1px;height:719px;background:#666"></div>
<svg style="left:731px;top:88.5px" width="14" height="15" viewBox="0 0 14 15" ><rect x=".500" y=".500" width="6.500" height="6.500" fill="#b9cfe8" stroke="#556" stroke-width="1"/><path d="M2.500 8.500A4.500 4.500 0 1 0 9 4.500" fill="none" stroke="#e02020" stroke-width="1.100" stroke-dasharray="1.300 1"/><path d="M7.500 3.500l2.500 1l-1 -2.700z" fill="#e02020"/></svg>
<span class="t" style="left:745px;top:89px;;letter-spacing:0.115px;">Transform (Shift+Ctrl+M)</span>
<div class="a " style="left:1029px;top:90px;width:11px;height:11px;border:1px solid #737373;border-radius:2.500px;background:#f2f2f2"></div>
<svg style="left:1032px;top:93px" width="5" height="5" viewBox="0 0 5 5" ><path d="M4.500 0L0 2.500L4.500 5z" fill="#666"/></svg>
<div class="a " style="left:1051px;top:90px;width:11px;height:11px;border:1px solid #737373;border-radius:2.500px;background:#f2f2f2"></div>
<svg style="left:1053px;top:92px" width="7" height="7" viewBox="0 0 7 7" ><path d="M1.200 1.200L5.800 5.800M5.800 1.200L1.200 5.800" stroke="#555" stroke-width="1.900"/></svg>
<div class="a " style="left:731px;top:107px;width:336px;height:1px;background:#a0a0a0"></div>
<div class="a " style="left:735px;top:136px;width:328px;height:83px;background:#fff;border:1px solid #898c95"></div>
<div class="a " style="left:780px;top:115px;width:34px;height:22px;border:1px solid #898c95;background:linear-gradient(180deg,#f2f2f2 0,#ebebeb 50%,#dddddd 50%,#cfcfcf 100%)"></div>
<span class="t" style="left:783px;top:120px;;letter-spacing:-0.706px;"><u>S</u>cale</span>
<div class="a " style="left:815px;top:115px;width:43px;height:22px;border:1px solid #898c95;background:linear-gradient(180deg,#f2f2f2 0,#ebebeb 50%,#dddddd 50%,#cfcfcf 100%)"></div>
<span class="t" style="left:818px;top:120px;;letter-spacing:-0.062px;"><u>R</u>otate</span>
<div class="a " style="left:859px;top:115px;width:36px;height:22px;border:1px solid #898c95;background:linear-gradient(180deg,#f2f2f2 0,#ebebeb 50%,#dddddd 50%,#cfcfcf 100%)"></div>
<span class="t" style="left:862px;top:120px;;letter-spacing:-0.340px;">Ske<u>w</u></span>
<div class="a " style="left:896px;top:115px;width:42px;height:22px;border:1px solid #898c95;background:linear-gradient(180deg,#f2f2f2 0,#ebebeb 50%,#dddddd 50%,#cfcfcf 100%)"></div>
<span class="t" style="left:899px;top:120px;;letter-spacing:0.305px;">Matri<u>x</u></span>
<div class="a " style="left:735px;top:112px;width:44px;height:26px;border:1px solid #898c95;border-bottom:none;background:#fff"></div>
<span class="t" style="left:742px;top:119px;;letter-spacing:0.160px;"><u>M</u>ove</span>
<svg style="left:739px;top:143px" width="26" height="17" viewBox="0 0 26 17" ><defs><linearGradient id="mvb" x1="0" y1="0" x2="1" y2="1"><stop offset="0" stop-color="#8fb0d8"/><stop offset="1" stop-color="#f0f5fb"/></linearGradient><linearGradient id="mvg" x1="0" y1="0" x2="1" y2="1"><stop offset="0" stop-color="#c4d4ea"/><stop offset="1" stop-color="#fafcfe"/></linearGradient></defs><rect x=".500" y=".500" width="9" height="8" fill="url(#mvg)" stroke="#a8a8a8" stroke-width="1"/><rect x="14.500" y=".500" width="9" height="8" fill="url(#mvb)" stroke="#000" stroke-width="1.200"/><path d="M5 12.500h13" stroke="#000" stroke-width="1.100"/><path d="M17 10l3.300 2.500l-3.300 2.500z" fill="#000"/></svg>
<span class="t" style="left:769px;top:146px;;letter-spacing:0.011px;"><u>H</u>orizontal:</span>
<div class="a entry" style="left:839px;top:141px;width:80px;height:23px;border-right:none"></div>
<span class="t" style="left:843px;top:146px;font-size:12px;letter-spacing:-0.706px;">0.000</span>
<div class="a " style="left:919px;top:141px;width:12px;height:23px;background:#fff"></div>
<div class="a " style="left:920px;top:142px;width:10px;height:21px;background:#b4b4b8"></div>
<div class="a " style="left:920px;top:142px;width:10px;height:10px;border:1px solid #a6a6aa;background:#ececee"></div>
<div class="a " style="left:920px;top:153px;width:10px;height:10px;border:1px solid #a6a6aa;background:#ececee"></div>
<svg style="left:922px;top:145px" width="6" height="4"><path d="M0 3.500L3 0.300L6 3.500z" fill="#4f6bbd"/></svg>
<svg style="left:922px;top:156px" width="6" height="4"><path d="M0 0.500L3 3.700L6 0.500z" fill="#4f6bbd"/></svg>
<div class="a " style="left:939px;top:142px;width:55px;height:21px;background:#fff;border:1px solid #8e8f95"></div>
<span class="t" style="left:943px;top:146px;;letter-spacing:-0.594px;">px</span>
<div class="a " style="left:977px;top:143px;width:16px;height:19px;border:1px solid #6f6f6f;border-radius:2px;background:linear-gradient(180deg,#f4f4f4,#dcdcdc 50%,#cfcfcf)"></div>
<svg style="left:981px;top:151px" width="7" height="4" viewBox="0 0 7 4" ><path d="M0 0h7L3.500 4z" fill="#000"/></svg>
<svg style="left:745px;top:167px" width="17" height="26" viewBox="0 0 17 26" ><rect x="7.500" y=".500" width="8" height="8.500" fill="url(#mvb)" stroke="#000" stroke-width="1.200"/><rect x="7.500" y="14.500" width="8" height="8.500" fill="url(#mvg)" stroke="#a8a8a8" stroke-width="1"/><path d="M3.500 19v-13" stroke="#000" stroke-width="1.100"/><path d="M1 7l2.500-3.300l2.500 3.300z" fill="#000"/></svg>
<span class="t" style="left:785px;top:172px;;letter-spacing:-0.132px;"><u>V</u>ertical:</span>
<div class="a entry" style="left:839px;top:167px;width:80px;height:23px;border-right:none"></div>
<span class="t" style="left:843px;top:172px;font-size:12px;letter-spacing:-0.706px;">0.000</span>
<div class="a " style="left:919px;top:167px;width:12px;height:23px;background:#fff"></div>
<div class="a " style="left:920px;top:168px;width:10px;height:21px;background:#b4b4b8"></div>
<div class="a " style="left:920px;top:168px;width:10px;height:10px;border:1px solid #a6a6aa;background:#ececee"></div>
<div class="a " style="left:920px;top:179px;width:10px;height:10px;border:1px solid #a6a6aa;background:#ececee"></div>
<svg style="left:922px;top:171px" width="6" height="4"><path d="M0 3.500L3 0.300L6 3.500z" fill="#4f6bbd"/></svg>
<svg style="left:922px;top:182px" width="6" height="4"><path d="M0 0.500L3 3.700L6 0.500z" fill="#4f6bbd"/></svg>
<div class="a chk" style="left:741px;top:197px;width:13px;height:13px;"></div>
<svg style="left:743px;top:199px" width="9" height="9" viewBox="0 0 9 9" ><path d="M1 4.500L3.500 7.500L8 1" fill="none" stroke="#2a3a8a" stroke-width="1.800"/></svg>
<span class="t" style="left:760px;top:197px;;letter-spacing:-0.159px;">Rela<u>t</u>ive move</span>
<div class="a chk" style="left:737px;top:224px;width:13px;height:13px;"></div>
<span class="t" style="left:756px;top:224px;;letter-spacing:-0.074px;">Apply to each <u>o</u>bject separately</span>
<div class="a btn" style="left:884px;top:246px;width:83px;height:25px;"></div>
<span class="t" style="left:912px;top:252px;;letter-spacing:-0.338px;"><u>C</u>lear</span>
<div class="a btn" style="left:975px;top:246px;width:83px;height:25px;"></div>
<span class="t" style="left:1001px;top:252px;;letter-spacing:0.194px;"><u>A</u>pply</span>
<div class="a " style="left:731px;top:280px;width:337px;height:1px;background:#fdfdfd"></div>
<svg style="left:730px;top:289px" width="14" height="15" viewBox="0 0 14 15" ><rect x="1" y="5.500" width="6.500" height="7" fill="#f7c93a" stroke="#d8a520" stroke-width=".6"/><path d="M7.500 1.500h1.500l.700 1.500h1.600l.700-1.500h1.500v3.500l-1.500 1.200v3.600l1.500 1.200v3.500h-1.500l-.700-1.500h-1.600l-.700 1.500h-1.500v-3.500l1.500-1.200v-3.600l-1.500-1.200z" fill="#c8c8c8" stroke="#3a3a3a" stroke-width=".9"/></svg>
<span class="t" style="left:745px;top:290px;;letter-spacing:-0.033px;">Object Properties (Shift+Ctrl+O)</span>
<div class="a " style="left:1029px;top:291px;width:11px;height:11px;border:1px solid #737373;border-radius:2.500px;background:#f2f2f2"></div>
<svg style="left:1032px;top:294px" width="5" height="5" viewBox="0 0 5 5" ><path d="M4.500 0L0 2.500L4.500 5z" fill="#666"/></svg>
<div class="a " style="left:1051px;top:291px;width:11px;height:11px;border:1px solid #737373;border-radius:2.500px;background:#f2f2f2"></div>
<svg style="left:1053px;top:293px" width="7" height="7" viewBox="0 0 7 7" ><path d="M1.200 1.200L5.800 5.800M5.800 1.200L1.200 5.800" stroke="#555" stroke-width="1.900"/></svg>
<div class="a " style="left:731px;top:308px;width:336px;height:1px;background:#a0a0a0"></div>
<span class="t" style="left:756px;top:322px;;letter-spacing:-0.448px;"><u>I</u>D:</span>
<div class="a entry" style="left:773px;top:317px;width:286px;height:23px;"></div>
<span class="t" style="left:778px;top:322px;font-size:12px;letter-spacing:-0.106px;">path6</span>
<span class="t" style="left:739px;top:349px;;letter-spacing:-0.286px;"><u>L</u>abel:</span>
<div class="a entry" style="left:773px;top:344px;width:286px;height:23px;"></div>
<span class="t" style="left:778px;top:349px;font-size:12px;letter-spacing:-0.117px;">#path6</span>
<span class="t" style="left:744px;top:376px;;letter-spacing:0.070px;"><u>T</u>itle:</span>
<div class="a entry" style="left:773px;top:371px;width:286px;height:23px;"></div>
<span class="t" style="left:740px;top:402px;;letter-spacing:-0.031px;"><u>D</u>escription:</span>
<div class="a " style="left:741px;top:421px;width:316px;height:217px;background:#fff;border:1px solid #8e8f95;border-right-color:#e3e3e3;border-bottom-color:#e3e3e3"></div>
<div class="a chk" style="left:741px;top:654px;width:13px;height:13px;"></div>
<span class="t" style="left:760.5px;top:654px;;letter-spacing:-0.047px;"><u>H</u>ide</span>
<div class="a chk" style="left:847px;top:654px;width:13px;height:13px;"></div>
<span class="t" style="left:866px;top:654px;;letter-spacing:-0.094px;">L<u>o</u>ck</span>
<div class="a btn" style="left:953px;top:649px;width:105px;height:23px;"></div>
<span class="t" style="left:998px;top:654px;;letter-spacing:-0.677px;"><u>S</u>et</span>
<div class="a " style="left:739px;top:682px;width:9px;height:9px;border:1px solid #949aa8;background:linear-gradient(135deg,#fff,#e8e8ee);border-radius:1px"></div>
<div class="a " style="left:741px;top:686px;width:5px;height:1px;background:#1a2a7a"></div>
<div class="a " style="left:743px;top:684px;width:1px;height:5px;background:#1a2a7a"></div>
<span class="t" style="left:752px;top:680px;;letter-spacing:0.177px;"><u>I</u>nteractivity</span>
<div class="a " style="left:731px;top:699px;width:337px;height:1px;background:#fdfdfd"></div>
<div class="a " style="left:733px;top:704px;width:334px;height:19px;border:1px solid #707070;border-radius:3px;background:linear-gradient(180deg,#f2f2f2 0,#ebebeb 48%,#dddddd 52%,#cfcfcf 100%);box-shadow:inset 0 0 0 1px #fcfcfc"></div>
<span class="t" style="left:751px;top:707px;;letter-spacing:-0.185px;">Export PNG Image (Shift+Ctrl+E)</span>
<svg style="left:1053px;top:711px" width="8" height="5" viewBox="0 0 8 5" ><path d="M0 4.500L4 .500L8 4.500z" fill="#777"/></svg>
<svg style="left:735px;top:707px" width="14" height="14" viewBox="0 0 14 14" ><path d="M.500 .500h5.500l3 3v9h-8.500z" fill="#fdfdfd" stroke="#777" stroke-width="1"/><path d="M6 .500v3h3" fill="#e4e4e4" stroke="#777" stroke-width=".9"/><path d="M5 7h6" stroke="#111" stroke-width="1.300"/><path d="M9.500 4.800l3 2.200l-3 2.200z" fill="#111"/></svg>
<div class="a " style="left:733px;top:727px;width:334px;height:19px;border:1px solid #707070;border-radius:3px;background:linear-gradient(180deg,#f2f2f2 0,#ebebeb 48%,#dddddd 52%,#cfcfcf 100%);box-shadow:inset 0 0 0 1px #fcfcfc"></div>
<span class="t" style="left:751px;top:730px;;letter-spacing:-0.068px;">Fill and Stroke (Shift+Ctrl+F)</span>
<svg style="left:1053px;top:734px" width="8" height="5" viewBox="0 0 8 5" ><path d="M0 4.500L4 .500L8 4.500z" fill="#777"/></svg>
<svg style="left:736px;top:729px" width="13" height="15" viewBox="0 0 13 15" ><rect x=".800" y="1.500" width="10" height="12" fill="#fff" stroke="#222" stroke-width="1.300"/><path d="M2 12.500 L10 4 L10 12.500Z" fill="#222"/><path d="M7 6L12 .500L13 2L9 7Z" fill="#f5c211" stroke="#553" stroke-width=".6"/></svg>
<div class="a " style="left:733px;top:750px;width:334px;height:19px;border:1px solid #2c628b;border-radius:3px;background:linear-gradient(180deg,#e4f3fd 0,#c4e5f8 48%,#98d1f2 52%,#6cb8e6 100%);box-shadow:inset 0 0 0 1px rgba(255,255,255,.6)"></div>
<span class="t" style="left:751px;top:753px;;letter-spacing:-0.033px;">Object Properties (Shift+Ctrl+O)</span>
<svg style="left:1053px;top:757px" width="8" height="5" viewBox="0 0 8 5" ><path d="M0 4.500L4 .500L8 4.500z" fill="#000"/></svg>
<svg style="left:735px;top:751px" width="14" height="15" viewBox="0 0 14 15" ><rect x="1" y="5.500" width="6.500" height="7" fill="#f7c93a" stroke="#d8a520" stroke-width=".6"/><path d="M7.500 1.500h1.500l.700 1.500h1.600l.700-1.500h1.500v3.500l-1.500 1.200v3.600l1.500 1.200v3.500h-1.500l-.700-1.500h-1.600l-.700 1.500h-1.500v-3.500l1.500-1.200v-3.600l-1.500-1.200z" fill="#c8c8c8" stroke="#3a3a3a" stroke-width=".9"/></svg>
<div class="a " style="left:1069px;top:84px;width:62px;height:720px;background:#f3f4f9"></div>
<div class="a " style="left:1072px;top:84px;width:28px;height:720px;background:linear-gradient(180deg,#f1f3fa 0,#d5daee 6px)"></div>
<div class="a " style="left:1102px;top:84px;width:29px;height:720px;background:linear-gradient(180deg,#f1f3fa 0,#d5daee 6px)"></div>
<svg style="left:1077px;top:89px" width="18" height="18" viewBox="0 0 18 18"><path d="M2.500 1.500h8.500l4.500 4.500v10.500h-13z" fill="#fbfbfb" stroke="#a0a0a0" stroke-width="1"/><path d="M11 1.500v4.500h4.500" fill="#e6e6e6" stroke="#a0a0a0" stroke-width="1"/></svg>
<svg style="left:1077px;top:115px" width="18" height="18" viewBox="0 0 18 18"><path d="M1.500 4.500h5l1.500 2h7.500v8.500h-14z" fill="#c9cfa0" stroke="#8a9060" stroke-width="1"/><path d="M1.500 15l1.500-6h14l-1.500 6z" fill="#e0e4bb" stroke="#8a9060" stroke-width="1"/></svg>
<svg style="left:1077px;top:141px" width="18" height="18" viewBox="0 0 18 18"><rect x="1.500" y="1.500" width="15" height="15" rx="1.500" fill="#3f6fb5" stroke="#1f3f7a" stroke-width="1"/><rect x="3.500" y="1.500" width="11" height="7" fill="#fff"/><rect x="3.500" y="1.500" width="11" height="3" fill="#e03030"/><rect x="5" y="11" width="8" height="5.500" fill="#d8d8d8" stroke="#555" stroke-width=".7"/><rect x="6.500" y="12" width="2.500" height="3.500" fill="#345"/></svg>
<svg style="left:1077px;top:167px" width="18" height="18" viewBox="0 0 18 18"><rect x="4" y="1.500" width="10" height="7" fill="#fafafa" stroke="#888" stroke-width="1"/><path d="M6 4h6M6 6h6" stroke="#aaa" stroke-width=".8"/><rect x="1.500" y="8.500" width="15" height="7" rx="1.500" fill="#d8d8d8" stroke="#666" stroke-width="1"/><rect x="3" y="12" width="12" height="1.500" fill="#fff" stroke="#666" stroke-width=".5"/></svg>
<div class="a " style="left:1078px;top:194px;width:16px;height:1px;background:#f6f7fb"></div>
<div class="a " style="left:1078px;top:195px;width:16px;height:1px;background:#b5bace"></div>
<svg style="left:1077px;top:205px" width="18" height="18" viewBox="0 0 18 18"><path d="M6.500 1.500h6l4 4v11h-10z" fill="#fbfbfb" stroke="#222" stroke-width="1.100"/><path d="M12.500 1.500v4h4" fill="none" stroke="#222" stroke-width="1"/><path d="M0 9.500h9M9.500 9.500l-3.500-3v6z" stroke="#000" stroke-width="1.300" fill="#000"/></svg>
<svg style="left:1077px;top:231px" width="18" height="18" viewBox="0 0 18 18"><path d="M1.500 1.500h6l4 4v11h-10z" fill="#fbfbfb" stroke="#222" stroke-width="1.100"/><path d="M7.500 1.500v4h4" fill="none" stroke="#222" stroke-width="1"/><path d="M7 9.500h9M16.500 9.500l-3.500-3v6z" stroke="#000" stroke-width="1.300" fill="#000"/></svg>
<div class="a " style="left:1078px;top:258px;width:16px;height:1px;background:#f6f7fb"></div>
<div class="a " style="left:1078px;top:259px;width:16px;height:1px;background:#b5bace"></div>
<svg style="left:1077px;top:268px" width="18" height="18" viewBox="0 0 18 18"><defs><pattern id="dp277" width="2" height="2" patternUnits="userSpaceOnUse"><rect width="2" height="2" fill="#dedede"/><rect width="1" height="1" fill="#9c9c9c"/><rect x="1" y="1" width="1" height="1" fill="#9c9c9c"/></pattern></defs><path d="M2.500 1.500h8.500l4.500 4.500v10.500h-13z" fill="url(#dp277)" stroke="#a0a0a0" stroke-width="1" stroke-dasharray="1 1"/><path d="M6 6.500l5 5M11 6.500l-5 5" stroke="#c04848" stroke-width="1"/></svg>
<svg style="left:1077px;top:294px" width="18" height="18" viewBox="0 0 18 18"><defs><pattern id="dp303" width="2" height="2" patternUnits="userSpaceOnUse"><rect width="2" height="2" fill="#dedede"/><rect width="1" height="1" fill="#9c9c9c"/><rect x="1" y="1" width="1" height="1" fill="#9c9c9c"/></pattern></defs><path d="M2.500 1.500h8.500l4.500 4.500v10.500h-13z" fill="url(#dp303)" stroke="#a0a0a0" stroke-width="1" stroke-dasharray="1 1"/><path d="M6 6.500l5 5M11 6.500l-5 5" stroke="#c04848" stroke-width="1"/></svg>
<div class="a " style="left:1078px;top:323px;width:16px;height:1px;background:#f6f7fb"></div>
<div class="a " style="left:1078px;top:324px;width:16px;height:1px;background:#b5bace"></div>
<svg style="left:1077px;top:333px" width="18" height="18" viewBox="0 0 18 18"><path d="M1.500 1.500h10v10h-10z" fill="#f4f4f4" stroke="#b8b8c0" stroke-width="1"/><path d="M5.500 5.500h11v8l-3 3h-8z" fill="#fdfdfd" stroke="#a8a8b0" stroke-width="1"/><path d="M7.500 8.500h7M7.500 10.500h7M7.500 12.500h5" stroke="#b0b0b0" stroke-width="1"/></svg>
<svg style="left:1077px;top:359px" width="18" height="18" viewBox="0 0 18 18"><path d="M3 1L10 11M15 1L8 11" stroke="#c8c8c8" stroke-width="2.200"/><path d="M3 1L10 11M15 1L8 11" stroke="#888" stroke-width=".8"/><rect x="1.500" y="10.500" width="6.500" height="6" rx="2" fill="#e9a22a" stroke="#8a5a10" stroke-width="1"/><rect x="10" y="10.500" width="6.500" height="6" rx="2" fill="#e9a22a" stroke="#8a5a10" stroke-width="1"/><circle cx="4.700" cy="13.500" r="1.200" fill="#fff3d0"/><circle cx="13.300" cy="13.500" r="1.200" fill="#fff3d0"/></svg>
<svg style="left:1077px;top:385px" width="18" height="18" viewBox="0 0 18 18"><rect x="1.500" y="2.500" width="15" height="14.500" rx="1.500" fill="#d9922a" stroke="#7a4a10" stroke-width="1"/><rect x="4" y="4.500" width="10" height="10.500" fill="#fafafa" stroke="#888" stroke-width=".7"/><rect x="6" y=".800" width="6" height="3.200" rx="1" fill="#999" stroke="#555" stroke-width=".8"/><path d="M6 8h6M6 10h6M6 12h4" stroke="#bbb" stroke-width=".9"/></svg>
<div class="a " style="left:1078px;top:412px;width:16px;height:1px;background:#f6f7fb"></div>
<div class="a " style="left:1078px;top:413px;width:16px;height:1px;background:#b5bace"></div>
<svg style="left:1077px;top:423px" width="18" height="18" viewBox="0 0 18 18"><path d="M13 13L17 17" stroke="#111" stroke-width="2.400"/><circle cx="8.500" cy="8.500" r="7" fill="#d4d8de" stroke="#4a4a4a" stroke-width="1.500"/><circle cx="8.500" cy="8.500" r="5.200" fill="#f4f6f8" stroke="#999" stroke-width=".8"/><rect x="4.500" y="5" width="8" height="7" fill="#fff" stroke="#444" stroke-width=".9" stroke-dasharray="1.200 1"/></svg>
<svg style="left:1077px;top:449px" width="18" height="18" viewBox="0 0 18 18"><path d="M13 13L17 17" stroke="#111" stroke-width="2.400"/><circle cx="8.500" cy="8.500" r="7" fill="#d4d8de" stroke="#4a4a4a" stroke-width="1.500"/><circle cx="8.500" cy="8.500" r="5.200" fill="#f4f6f8" stroke="#999" stroke-width=".8"/><rect x="4.500" y="4.500" width="5.500" height="5" fill="#f5d060" stroke="#a8842a" stroke-width=".8"/><rect x="7" y="7.500" width="5.500" height="5" fill="#f5c211" stroke="#a8842a" stroke-width=".8"/></svg>
<svg style="left:1077px;top:475px" width="18" height="18" viewBox="0 0 18 18"><path d="M13 13L17 17" stroke="#111" stroke-width="2.400"/><circle cx="8.500" cy="8.500" r="7" fill="#d4d8de" stroke="#4a4a4a" stroke-width="1.500"/><circle cx="8.500" cy="8.500" r="5.200" fill="#f4f6f8" stroke="#999" stroke-width=".8"/><rect x="5" y="4.500" width="7" height="8" fill="#fdfdfd" stroke="#666" stroke-width=".9"/><path d="M12.500 5.500v7.500h-6.500" stroke="#999" stroke-width="1" fill="none"/></svg>
<div class="a " style="left:1078px;top:502px;width:16px;height:1px;background:#f6f7fb"></div>
<div class="a " style="left:1078px;top:503px;width:16px;height:1px;background:#b5bace"></div>
<svg style="left:1077px;top:513px" width="18" height="18" viewBox="0 0 18 18"><rect x="1.500" y="1.500" width="10" height="10" fill="#dfe6ee" stroke="#788" stroke-width="1"/><rect x="5.500" y="5.500" width="11" height="11" fill="#c9dcec" stroke="#667" stroke-width="1"/><path d="M6.500 6.500h9v2h-9z" fill="#eef4fa"/></svg>
<svg style="left:1077px;top:539px" width="18" height="18" viewBox="0 0 18 18"><rect x="1.500" y="1.500" width="10" height="10" fill="#dfe6ee" stroke="#788" stroke-width="1"/><rect x="5.500" y="5.500" width="11" height="11" fill="#c9dcec" stroke="#667" stroke-width="1"/><path d="M6.500 6.500h9v2h-9z" fill="#eef4fa"/><rect x="8" y="10.500" width="6" height="4.500" fill="#e9b530" stroke="#7a5a10" stroke-width=".8"/><path d="M9.500 10.500v-1.500a1.500 1.500 0 0 1 3 0v1.500" fill="none" stroke="#555" stroke-width="1"/></svg>
<svg style="left:1077px;top:565px" width="18" height="18" viewBox="0 0 18 18"><rect x="1.500" y="1.500" width="10" height="10" fill="#dfe6ee" stroke="#788" stroke-width="1"/><rect x="5.500" y="5.500" width="11" height="11" fill="#c9dcec" stroke="#667" stroke-width="1"/><path d="M6.500 6.500h9v2h-9z" fill="#eef4fa"/><rect x="8" y="10.500" width="6" height="4.500" fill="#8cc84a" stroke="#3a6a10" stroke-width=".8"/><path d="M9.500 10.500v-2a1.500 1.500 0 0 1 3 0" fill="none" stroke="#555" stroke-width="1"/></svg>
<div class="a " style="left:1078px;top:592px;width:16px;height:1px;background:#f6f7fb"></div>
<div class="a " style="left:1078px;top:593px;width:16px;height:1px;background:#b5bace"></div>
<svg style="left:1077px;top:602px" width="18" height="18" viewBox="0 0 18 18"><path d="M1.500 1.500h2v2h-2zM14.500 1.500h2v2h-2zM1.500 14.500h2v2h-2zM14.500 14.500h2v2h-2z" fill="#111"/><path d="M5 2.500h2M8.500 2.500h2M12 2.500h1.500M5 15.500h2M8.500 15.500h2M12 15.500h1.500M2.500 5v2M2.500 8.500v2M2.500 12v1.500M15.500 5v2M15.500 8.500v2M15.500 12v1.500" stroke="#8a8a8a" stroke-width=".9"/><rect x="4.500" y="8.500" width="7" height="5.500" fill="#c9dcec" stroke="#667" stroke-width=".9"/><circle cx="11" cy="7" r="3.800" fill="#e4edf5" stroke="#778" stroke-width=".9"/></svg>
<svg style="left:1077px;top:628px" width="18" height="18" viewBox="0 0 18 18"><path d="M1.500 1.500h2v2h-2zM14.500 1.500h2v2h-2zM1.500 14.500h2v2h-2zM14.500 14.500h2v2h-2z" fill="#111"/><path d="M5 2.500h2M8.500 2.500h2M12 2.500h1.500M5 15.500h2M8.500 15.500h2M12 15.500h1.500M2.500 5v2M2.500 8.500v2M2.500 12v1.500M15.500 5v2M15.500 8.500v2M15.500 12v1.500" stroke="#8a8a8a" stroke-width=".9"/><rect x="4.500" y="9" width="7" height="5.500" fill="#f5c211" stroke="#8a6a10" stroke-width=".9"/><circle cx="11" cy="7" r="3.800" fill="#e4edf5" stroke="#778" stroke-width=".9"/></svg>
<div class="a " style="left:1078px;top:656px;width:16px;height:1px;background:#f6f7fb"></div>
<div class="a " style="left:1078px;top:657px;width:16px;height:1px;background:#b5bace"></div>
<svg style="left:1077px;top:667px" width="18" height="18" viewBox="0 0 18 18"><rect x="1.500" y="2.500" width="14" height="13" fill="#fff" stroke="#111" stroke-width="1.600"/><path d="M2 15.500L15.500 4v11.500z" fill="#111"/><path d="M9 8L15 2l2 2l-5 6z" fill="#f5c211" stroke="#553" stroke-width=".7"/></svg>
<span class="t" style="left:1076px;top:690px;width:20px;height:26px;line-height:26px;font-family:'Liberation Serif',serif;font-size:24px;font-weight:bold;text-align:center;color:#111">T</span>
<svg style="left:1077px;top:719px" width="18" height="18" viewBox="0 0 18 18"><path d="M2 5h12l3 2.500h-12z" fill="#e6e6e6" stroke="#555" stroke-width=".9"/><path d="M2 8.500h12l3 2.500h-12z" fill="#d6d6d6" stroke="#555" stroke-width=".9"/><path d="M2 12h12l3 2.500h-12z" fill="#bbb" stroke="#555" stroke-width=".9"/></svg>
<svg style="left:1077px;top:745px" width="18" height="18" viewBox="0 0 18 18"><rect x="1.500" y="1.500" width="15" height="15" fill="#f0f0f0" stroke="#555" stroke-width="1"/><rect x="1.500" y="1.500" width="15" height="4" fill="#667"/><path d="M7 8.500l-3 2.500l3 2.500M11 8.500l3 2.500l-3 2.500" stroke="#333" stroke-width="1.200" fill="none"/></svg>
<span class="t" style="left:1082px;top:783px;color:#4a4aa8;font-size:13px;">»</span>
<div class="a tog" style="left:1103px;top:86px;width:26px;height:24px;"></div>
<svg style="left:1107px;top:89px" width="18" height="18" viewBox="0 0 18 18"><path d="M5 5L12.500 12.500" stroke="#000" stroke-width="1.300"/><path d="M13.800 13.800l-4.500-1.300l3.200-3.200z" fill="#000"/><rect x="2.300" y="2.300" width="3.400" height="3.400" transform="rotate(45 4 4)" fill="#b8bcf0" stroke="#2222ff" stroke-width="1.200"/><rect x="12.600" y="12.600" width="3.200" height="3.200" transform="rotate(45 14.200 14.200)" fill="#b0d8b0" stroke="#1a8a1a" stroke-width="1.200"/></svg>
<div class="a " style="left:1108px;top:116px;width:16px;height:1px;background:#f6f7fb"></div>
<div class="a " style="left:1108px;top:117px;width:16px;height:1px;background:#b5bace"></div>
<svg style="left:1107px;top:126px" width="18" height="18" viewBox="0 0 18 18"><path d="M5 5L12.500 12.500" stroke="#000" stroke-width="1.300"/><path d="M13.800 13.800l-4.500-1.300l3.200-3.200z" fill="#000"/><rect x="2.300" y="2.300" width="3.400" height="3.400" transform="rotate(45 4 4)" fill="#b8bcf0" stroke="#2222ff" stroke-width="1.200"/><rect x="12.600" y="12.600" width="3.200" height="3.200" transform="rotate(45 14.200 14.200)" fill="#b0d8b0" stroke="#1a8a1a" stroke-width="1.200"/></svg>
<svg style="left:1107px;top:152px" width="18" height="18" viewBox="0 0 18 18"><path d="M2 14.500h10M13.500 13v-11" stroke="#2a8a2a" stroke-width="1.300" stroke-dasharray="1.500 1.500" fill="none"/></svg>
<svg style="left:1107px;top:178px" width="18" height="18" viewBox="0 0 18 18"><path d="M2 14.500h9M14.500 12v-10" stroke="#333" stroke-width="1.200" stroke-dasharray="1.500 1.500" fill="none"/><rect x="12" y="12" width="4" height="4" transform="rotate(45 14 14)" fill="#cfc" stroke="#2a8a2a" stroke-width="1"/></svg>
<svg style="left:1107px;top:204px" width="18" height="18" viewBox="0 0 18 18"><path d="M2 15.500h11M14.500 14v-6" stroke="#222" stroke-width="1.200" stroke-dasharray="1.500 1.200" fill="none"/><rect x="12.800" y="2.800" width="3.400" height="3.400" transform="rotate(45 14.500 4.500)" fill="#cfc" stroke="#2a8a2a" stroke-width="1"/></svg>
<svg style="left:1107px;top:230px" width="18" height="18" viewBox="0 0 18 18"><path d="M2 15.500h12M14.500 15v-12" stroke="#222" stroke-width="1.200" stroke-dasharray="1.500 1.200" fill="none"/><rect x="4" y="5" width="3" height="3" transform="rotate(45 5.500 6.500)" fill="#cfc" stroke="#2a8a2a" stroke-width="1"/></svg>
<div class="a " style="left:1108px;top:258px;width:16px;height:1px;background:#f6f7fb"></div>
<div class="a " style="left:1108px;top:259px;width:16px;height:1px;background:#b5bace"></div>
<div class="a tog" style="left:1103px;top:266px;width:26px;height:24px;"></div>
<svg style="left:1107px;top:268px" width="18" height="18" viewBox="0 0 18 18"><path d="M5 5L12.500 12.500" stroke="#000" stroke-width="1.300"/><path d="M13.800 13.800l-4.500-1.300l3.200-3.200z" fill="#000"/><rect x="2.300" y="2.300" width="3.400" height="3.400" transform="rotate(45 4 4)" fill="#b8bcf0" stroke="#2222ff" stroke-width="1.200"/><rect x="12.600" y="12.600" width="3.200" height="3.200" transform="rotate(45 14.200 14.200)" fill="#b0d8b0" stroke="#1a8a1a" stroke-width="1.200"/></svg>
<svg style="left:1107px;top:294px" width="18" height="18" viewBox="0 0 18 18"><path d="M2 2C9 3 13 7 14 12C12 15 9 15 8 14.500C11 13 12 11 16 10.500" fill="none" stroke="#1a8a1a" stroke-width="1.500"/></svg>
<svg style="left:1107px;top:320px" width="18" height="18" viewBox="0 0 18 18"><path d="M1 15L17 3M3 4L16 15" stroke="#333" stroke-width="1"/><rect x="7" y="7.500" width="3.600" height="3.600" transform="rotate(45 8.800 9.300)" fill="#8c8" stroke="#2a8a2a" stroke-width="1.200"/></svg>
<svg style="left:1107px;top:346px" width="18" height="18" viewBox="0 0 18 18"><path d="M2 2C9 3 13 7 14 12C12 15 9 15 8 14.500M14 12C15 11 16 10.500 17 10" fill="none" stroke="#444" stroke-width="1"/><rect x="6.500" y="12" width="4" height="4" transform="rotate(45 8.500 14)" fill="#99c" stroke="#2a8a2a" stroke-width="1.200"/></svg>
<svg style="left:1107px;top:372px" width="18" height="18" viewBox="0 0 18 18"><path d="M2 4C6 3 9 5 10 9C11 13 13 14 16 11" fill="none" stroke="#444" stroke-width="1"/><rect x="6.500" y="2.500" width="4" height="4" fill="#99c" stroke="#2a8a2a" stroke-width="1.200"/></svg>
<svg style="left:1107px;top:398px" width="18" height="18" viewBox="0 0 18 18"><path d="M2 15L16 4" stroke="#c22" stroke-width="1"/><path d="M3 11l2 6M5.500 9.500l2 6M11 5.500l2 6M13.500 3.500l2 6" stroke="#c22" stroke-width="1.100"/><circle cx="9" cy="9.500" r="1.800" fill="#8c8" stroke="#2a8a2a" stroke-width="1.100"/></svg>
<div class="a " style="left:1108px;top:426px;width:16px;height:1px;background:#f6f7fb"></div>
<div class="a " style="left:1108px;top:427px;width:16px;height:1px;background:#b5bace"></div>
<div class="a tog" style="left:1103px;top:435px;width:26px;height:24px;"></div>
<svg style="left:1107px;top:437px" width="18" height="18" viewBox="0 0 18 18"><path d="M5 5L12.500 12.500" stroke="#000" stroke-width="1.300"/><path d="M13.800 13.800l-4.500-1.300l3.200-3.200z" fill="#000"/><rect x="2.300" y="2.300" width="3.400" height="3.400" transform="rotate(45 4 4)" fill="#b8bcf0" stroke="#2222ff" stroke-width="1.200"/><rect x="12.600" y="12.600" width="3.200" height="3.200" transform="rotate(45 14.200 14.200)" fill="#b0d8b0" stroke="#1a8a1a" stroke-width="1.200"/></svg>
<svg style="left:1107px;top:463px" width="18" height="18" viewBox="0 0 18 18"><path d="M3 15.500h11.500v-12" stroke="#888" stroke-width="1" fill="none"/><circle cx="7" cy="7" r="1.800" fill="#cfc" stroke="#2a8a2a" stroke-width="1.200"/></svg>
<svg style="left:1107px;top:488px" width="18" height="18" viewBox="0 0 18 18"><path d="M2 15.500h13M14.500 15v-13" stroke="#222" stroke-width="1.200" stroke-dasharray="1.500 1.200" fill="none"/><path d="M3 8h7M6.500 4.500v7" stroke="#111" stroke-width="1.300"/></svg>
<span class="t" style="left:1108px;top:513.500px;width:18px;height:20px;line-height:20px;font-size:17px;font-weight:bold;color:#111;text-align:center;transform:scaleX(1.1)">A</span>
<svg style="left:1105px;top:524.5px" width="24" height="8" viewBox="0 0 24 8" ><path d="M3 4.500L19.500 4.500" stroke="#2a8a2a" stroke-width="1"/><rect x="2" y="2.500" width="3.600" height="3.600" transform="rotate(45 3.800 4.300)" fill="#bdb" stroke="#2a8a2a" stroke-width="1.100"/></svg>
<div class="a " style="left:1108px;top:542px;width:16px;height:1px;background:#f6f7fb"></div>
<div class="a " style="left:1108px;top:543px;width:16px;height:1px;background:#b5bace"></div>
<svg style="left:1107px;top:552px" width="18" height="18" viewBox="0 0 18 18"><defs><linearGradient id="pg" x1="0" y1="0" x2="1" y2="1"><stop offset="0" stop-color="#fff"/><stop offset="1" stop-color="#bbb"/></linearGradient></defs><rect x="4" y="2" width="10" height="14" fill="url(#pg)" stroke="#111" stroke-width="1.300"/></svg>
<div class="a tog" style="left:1103px;top:577px;width:26px;height:24px;"></div>
<svg style="left:1107px;top:579px" width="18" height="18" viewBox="0 0 18 18"><path d="M2.500 1v16M7 1v16M11.500 1v16M16 1v16M1 3.500h16M1 8h16M1 12.500h16M1 16.500h16" stroke="#0000ff" stroke-width="1.300"/></svg>
<div class="a tog" style="left:1103px;top:603px;width:26px;height:24px;"></div>
<svg style="left:1107px;top:605px" width="18" height="18" viewBox="0 0 18 18"><path d="M1.500 2v14.500M13.500 2v14.500M10.500 2L5 16.500" stroke="#0000ff" stroke-width="1.300"/></svg>
<div class="a " style="left:8px;top:804px;width:1123px;height:61px;background:#f0f0f0"></div>
<div class="a " style="left:8px;top:864px;width:1123px;height:1px;background:#fbfbfb"></div>
<div class="a " style="left:24px;top:806px;width:1096px;height:14px;background:linear-gradient(90deg,#000000 0px,#000000 14px,#1a1a1a 14px,#1a1a1a 28px,#333333 28px,#333333 42px,#4d4d4d 42px,#4d4d4d 56px,#666666 56px,#666666 70px,#808080 70px,#808080 84px,#999999 84px,#999999 98px,#b3b3b3 98px,#b3b3b3 112px,#cccccc 112px,#cccccc 126px,#e6e6e6 126px,#e6e6e6 140px,#ececec 140px,#ececec 154px,#f2f2f2 154px,#f2f2f2 168px,#f9f9f9 168px,#f9f9f9 182px,#ffffff 182px,#ffffff 196px,#800000 196px,#800000 210px,#ff0000 210px,#ff0000 224px,#808000 224px,#808000 238px,#ffff00 238px,#ffff00 252px,#008000 252px,#008000 266px,#00ff00 266px,#00ff00 280px,#008080 280px,#008080 294px,#00ffff 294px,#00ffff 308px,#000080 308px,#000080 322px,#0000ff 322px,#0000ff 336px,#800080 336px,#800080 350px,#ff00ff 350px,#ff00ff 364px,#2b0000 364px,#2b0000 378px,#550000 378px,#550000 392px,#800000 392px,#800000 406px,#aa0000 406px,#aa0000 420px,#d40000 420px,#d40000 434px,#ff0000 434px,#ff0000 448px,#ff2a2a 448px,#ff2a2a 462px,#ff5555 462px,#ff5555 476px,#ff8080 476px,#ff8080 490px,#ffaaaa 490px,#ffaaaa 504px,#ffd5d5 504px,#ffd5d5 518px,#280b0b 518px,#280b0b 532px,#501616 532px,#501616 546px,#782121 546px,#782121 560px,#a02c2c 560px,#a02c2c 574px,#c83737 574px,#c83737 588px,#d35f5f 588px,#d35f5f 602px,#de8787 602px,#de8787 616px,#e9afaf 616px,#e9afaf 630px,#f4d7d7 630px,#f4d7d7 644px,#241c1c 644px,#241c1c 658px,#483737 658px,#483737 672px,#6c5353 672px,#6c5353 686px,#916f6f 686px,#916f6f 700px,#ac9393 700px,#ac9393 714px,#c8b7b7 714px,#c8b7b7 728px,#e3dbdb 728px,#e3dbdb 742px,#2b1100 742px,#2b1100 756px,#552200 756px,#552200 770px,#803300 770px,#803300 784px,#aa4400 784px,#aa4400 798px,#d45500 798px,#d45500 812px,#ff6600 812px,#ff6600 826px,#ff7f2a 826px,#ff7f2a 840px,#ff9955 840px,#ff9955 854px,#ffb380 854px,#ffb380 868px,#ffccaa 868px,#ffccaa 882px,#ffe6d5 882px,#ffe6d5 896px,#28170b 896px,#28170b 910px,#502d16 910px,#502d16 924px,#784421 924px,#784421 938px,#a05a2c 938px,#a05a2c 952px,#c87137 952px,#c87137 966px,#d38d5f 966px,#d38d5f 980px,#deaa87 980px,#deaa87 994px,#e9c6af 994px,#e9c6af 1008px,#f4e3d7 1008px,#f4e3d7 1022px,#241f1c 1022px,#241f1c 1036px,#483e37 1036px,#483e37 1050px,#6c5d53 1050px,#6c5d53 1064px,#917c6f 1064px,#917c6f 1078px,#ac9d93 1078px,#ac9d93 1092px,#c8beb7 1092px,#c8beb7 1106px,#e3dedb 1106px,#e3dedb 1120px)"></div>
<div class="a " style="left:8px;top:805px;width:1113px;height:1px;background:#3a3a3a"></div>
<div class="a " style="left:9px;top:806px;width:15px;height:14px;background:#fff"></div>
<svg style="left:9px;top:806px" width="15" height="14" viewBox="0 0 15 14" ><path d="M.500 .500L14.500 13.500M14.500 .500L.500 13.500" stroke="#8a1010" stroke-width="1.300"/></svg>
<div class="a " style="left:8px;top:805px;width:1px;height:15px;background:#222"></div>
<div class="a " style="left:8px;top:820px;width:1123px;height:4px;background:#fafafa"></div>
<svg style="left:1123px;top:806px" width="5" height="8" viewBox="0 0 5 8" ><path d="M4.500 0L.500 4L4.500 8z" fill="#000"/></svg>
<div class="a " style="left:26px;top:824px;width:196px;height:14px;border:1px solid #979797;border-radius:2px;background:linear-gradient(180deg,#f6f6f6 0,#e9e9eb 45%,#d5d6d8 55%,#c2c3c6 100%)"></div>
<svg style="left:14px;top:827px" width="5" height="8" viewBox="0 0 5 8" ><path d="M4.500 0L.500 4L4.500 8z" fill="#999"/></svg>
<svg style="left:1112px;top:827px" width="5" height="8" viewBox="0 0 5 8" ><path d="M.500 0L4.500 4L.500 8z" fill="#444"/></svg>
<div class="a " style="left:120px;top:827px;width:1px;height:8px;background:#555"></div>
<div class="a " style="left:122px;top:827px;width:1px;height:8px;background:#555"></div>
<div class="a " style="left:124px;top:827px;width:1px;height:8px;background:#555"></div>
<span class="t" style="left:10.5px;top:838.5px;;letter-spacing:-0.334px;">Fill:</span>
<span class="t" style="left:10.5px;top:852px;;letter-spacing:-0.431px;">Stroke:</span>
<div class="a " style="left:50px;top:839px;width:80px;height:13px;background:#d3d3d3"></div>
<div class="a " style="left:50px;top:852px;width:56px;height:13px;background:#000"></div>
<span class="t" style="left:109px;top:852px;;letter-spacing:-0.715px;">1.77</span>
<span class="t" style="left:135px;top:845px;;letter-spacing:-1.086px;">O:</span>
<div class="a entry" style="left:148px;top:841px;width:37px;height:21px;border-right:none"></div>
<span class="t" style="left:152px;top:845px;font-size:12px;">0</span>
<div class="a " style="left:184px;top:841px;width:12px;height:21px;background:#fff"></div>
<div class="a " style="left:185px;top:842px;width:10px;height:19px;background:#b4b4b8"></div>
<div class="a " style="left:185px;top:842px;width:10px;height:9px;border:1px solid #a6a6aa;background:#ececee"></div>
<div class="a " style="left:185px;top:852px;width:10px;height:9px;border:1px solid #a6a6aa;background:#ececee"></div>
<svg style="left:187px;top:845px" width="6" height="4"><path d="M0 3.500L3 0.300L6 3.500z" fill="#4f6bbd"/></svg>
<svg style="left:187px;top:855px" width="6" height="4"><path d="M0 0.500L3 3.700L6 0.500z" fill="#4f6bbd"/></svg>
<div class="a " style="left:198px;top:840px;width:1px;height:24px;background:#a0a0a0"></div>
<div class="a " style="left:199px;top:840px;width:1px;height:24px;background:#fff"></div>
<svg style="left:203.5px;top:847px" width="10" height="9" viewBox="0 0 10 9" ><path d="M.500 5C2.500 2 7 2 9 5C7 8 2.500 8 .500 5z" fill="#555" stroke="#333" stroke-width=".7"/><circle cx="4.800" cy="5" r="1.700" fill="#111"/><path d="M1.500 2.500l-1-1.500M3.300 1.800l-.5-1.600M4.800 1.600v-1.600M6.300 1.800l.5-1.600M8 2.500l1-1.500M1.500 7.500l-1 1M8 7.500l1 1" stroke="#444" stroke-width=".7"/></svg>
<svg style="left:220px;top:847px" width="9" height="10" viewBox="0 0 9 10" ><rect x="1.500" y="4.500" width="6" height="5" fill="#ccc" stroke="#666" stroke-width=".8" stroke-dasharray="1 .6"/><path d="M2.500 4.500V3A2 2 0 0 1 6.500 3" fill="none" stroke="#777" stroke-width="1"/></svg>
<div class="a " style="left:231px;top:839px;width:68px;height:26px;background:#fff;border:1px solid #8e8f95"></div>
<span class="t" style="left:240px;top:845px;font-size:11px;letter-spacing:-0.297px;">(root)</span>
<div class="a " style="left:281px;top:840px;width:17px;height:24px;border:1px solid #6f6f6f;border-radius:2px;background:linear-gradient(180deg,#f4f4f4,#dcdcdc 50%,#cfcfcf)"></div>
<svg style="left:285px;top:850px" width="8" height="4" viewBox="0 0 8 4" ><path d="M0 0h8L4 4z" fill="#000"/></svg>
<span class="t" style="left:305px;top:845px;;letter-spacing:-0.047px;"><b>Alt</b>: click to select under; scroll mouse-wheel to cycle-select; drag to move selected or select by touch</span>
<div class="a " style="left:971px;top:840px;width:1px;height:24px;background:#b8b8b8"></div>
<div class="a " style="left:972px;top:840px;width:1px;height:24px;background:#fff"></div>
<span class="t" style="left:975.5px;top:838.5px;font-size:10px;letter-spacing:-0.977px;">X:</span>
<span class="t" style="left:975.5px;top:851px;font-size:10px;letter-spacing:-0.703px;">Y:</span>
<span class="t" style="left:1007px;top:839px;font-family:'Liberation Mono',monospace;font-size:11.500px;letter-spacing:-0.027px;">0.30</span>
<span class="t" style="left:1007px;top:851px;font-family:'Liberation Mono',monospace;font-size:11.500px;letter-spacing:-0.027px;">0.90</span>
<span class="t" style="left:1044.5px;top:845px;;letter-spacing:-1.336px;">Z:</span>
<div class="a entry" style="left:1055px;top:841px;width:46px;height:21px;border-right:none"></div>
<span class="t" style="left:1061px;top:845px;font-size:12px;letter-spacing:-0.551px;">333%</span>
<div class="a " style="left:1100px;top:841px;width:12px;height:21px;background:#fff"></div>
<div class="a " style="left:1101px;top:842px;width:10px;height:19px;background:#b4b4b8"></div>
<div class="a " style="left:1101px;top:842px;width:10px;height:9px;border:1px solid #a6a6aa;background:#ececee"></div>
<div class="a " style="left:1101px;top:852px;width:10px;height:9px;border:1px solid #a6a6aa;background:#ececee"></div>
<svg style="left:1103px;top:845px" width="6" height="4"><path d="M0 3.500L3 0.300L6 3.500z" fill="#4f6bbd"/></svg>
<svg style="left:1103px;top:855px" width="6" height="4"><path d="M0 0.500L3 3.700L6 0.500z" fill="#4f6bbd"/></svg>
<svg style="left:1118px;top:853px" width="11" height="11" viewBox="0 0 11 11" ><g fill="#c4c4c4"><rect x="8" y="0" width="2" height="2"/><rect x="4" y="4" width="2" height="2"/><rect x="8" y="4" width="2" height="2"/><rect x="0" y="8" width="2" height="2"/><rect x="4" y="8" width="2" height="2"/><rect x="8" y="8" width="2" height="2"/></g></svg>
</body></html>
